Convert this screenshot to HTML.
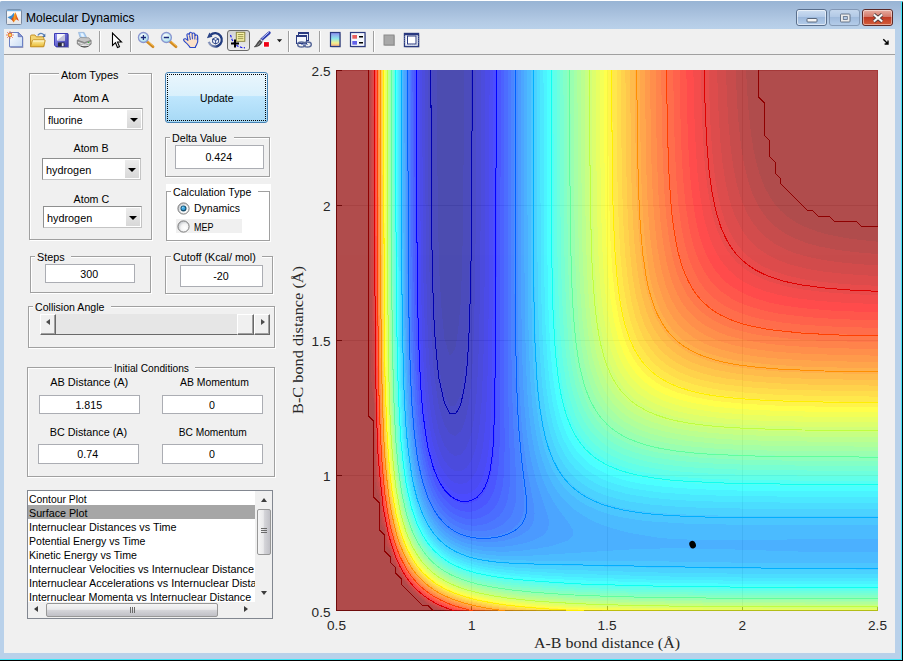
<!DOCTYPE html>
<html>
<head>
<meta charset="utf-8">
<title>Molecular Dynamics</title>
<style>
html,body{margin:0;padding:0;background:#fff;}
body{width:904px;height:664px;overflow:hidden;position:relative;font-family:"Liberation Sans",Arial,sans-serif;font-size:11px;color:#000;}
.abs{position:absolute;}
#win{position:absolute;left:0;top:1px;width:903px;height:660px;background:#b9d1ea;border-radius:2px 2px 0 0;overflow:hidden;}
#titlegrad{position:absolute;left:0;top:0;width:903px;height:28px;background:linear-gradient(#98b4d4 0%,#a3bcda 30%,#b4cbe5 75%,#b9d1ea 100%);}
#edgeR{position:absolute;left:901px;top:0;width:1px;height:660px;background:#3fe6f7;}
#edgeR2{position:absolute;left:902px;top:0;width:1px;height:660px;background:#000;}
#edgeB{position:absolute;left:0;top:658px;width:902px;height:1px;background:#3fe6f7;}
#edgeB2{position:absolute;left:0;top:659px;width:903px;height:1px;background:#000;}
#client{position:absolute;left:4px;top:28px;width:891px;height:624px;background:#f0f0f0;}
#title{position:absolute;left:26px;top:9px;font-size:12.05px;line-height:16px;color:#000;white-space:nowrap;}
#tbline{position:absolute;left:0;top:25px;width:891px;height:1px;background:#a0a0a0;}
.lbl{position:absolute;white-space:nowrap;line-height:13px;height:13px;font-size:11px;}
.ctr{text-align:center;}
.panel{position:absolute;border:1px solid #a0a0a0;box-shadow:1px 1px 0 #fff, inset 1px 1px 0 #fff;box-sizing:border-box;}
.ptitle{position:absolute;background:#f0f0f0;white-space:nowrap;line-height:13px;height:13px;font-size:11px;padding:0 2px;}
.edit{position:absolute;box-sizing:border-box;padding-right:1.5px;border:1px solid #abadb3;background:#fff;text-align:center;font-size:11px;white-space:nowrap;}
.popup{position:absolute;box-sizing:border-box;border:1px solid #8e8f8f;border-right-color:#c4c4c4;border-bottom-color:#c4c4c4;background:#fff;font-size:11px;white-space:nowrap;}
.popup>span{position:absolute;left:2.5px;top:4.5px;line-height:13px;}
.popup i{position:absolute;right:1px;top:1px;bottom:1px;width:14px;background:linear-gradient(#ececec,#d8d8d8);}
.popup i:after{content:"";position:absolute;left:3px;top:7.5px;border:4px solid transparent;border-top:4.500px solid #000;border-bottom:0;}
.sep{position:absolute;top:6px;width:1px;height:18px;background:#a0a0a0;box-shadow:1px 0 0 #fff;}
</style>
</head>
<body>
<div id="win">
 <div id="titlegrad"></div>
 <div id="edgeR"></div><div id="edgeR2"></div><div id="edgeB"></div><div id="edgeB2"></div>
 <svg class="abs" style="left:6px;top:8px" width="16" height="16" viewBox="0 0 16 16">
<defs><linearGradient id="gti" x1="0" y1="0" x2="0" y2="1"><stop offset="0" stop-color="#fff"/><stop offset="1" stop-color="#e4e4e6"/></linearGradient>
<linearGradient id="gml" x1="0" y1="0" x2="1" y2="0"><stop offset="0" stop-color="#c02010"/><stop offset=".45" stop-color="#f8a020"/><stop offset="1" stop-color="#c82818"/></linearGradient></defs>
<rect x=".5" y=".5" width="15" height="15" rx="1" fill="url(#gti)" stroke="#7a8aa0"/>
<path d="M1 1.500h14" stroke="#78b0e0" stroke-width="1.600"/>
<path d="M1.500 8.300l4-1.800 2.300-2.800 1 4.800-3.500 2.200z" fill="#3a8ad0"/>
<path d="M5.200 10.300l2.300-2.800 1.500-4.200c.8 0 1.400 2.300 2 4.200l1.800 4.300c-1.400-.8-2-1.800-2.800-1.200-1 .8-1.500 2.200-2.500 3-.6-1.600-1.300-2.400-2.300-3.300z" fill="url(#gml)"/>
</svg>

 <div id="title">Molecular Dynamics</div>
 <svg class="abs" style="left:790px;top:6px" width="110" height="22" viewBox="790 7 110 22">
<defs>
<linearGradient id="gc1" x1="0" y1="0" x2="0" y2="1"><stop offset="0" stop-color="#cfdff2"/><stop offset=".45" stop-color="#b4cbe8"/><stop offset=".5" stop-color="#9db9dc"/><stop offset="1" stop-color="#b5cdea"/></linearGradient>
<linearGradient id="gc2" x1="0" y1="0" x2="0" y2="1"><stop offset="0" stop-color="#e8b0a4"/><stop offset=".45" stop-color="#d4796a"/><stop offset=".5" stop-color="#c03a24"/><stop offset="1" stop-color="#d4603c"/></linearGradient>
</defs>
<rect x="796.500" y="9.500" width="30" height="16" rx="2.500" fill="url(#gc1)" stroke="#5a6f8c"/>
<rect x="797.500" y="10.500" width="28" height="14" rx="1.500" fill="none" stroke="#fff" stroke-opacity=".55"/>
<rect x="829.500" y="9.500" width="30" height="16" rx="2.500" fill="url(#gc1)" stroke="#7a8fac" opacity=".8"/>
<rect x="862.500" y="9.500" width="30" height="16" rx="2.500" fill="url(#gc2)" stroke="#5c2a28"/>
<rect x="863.500" y="10.500" width="28" height="14" rx="1.500" fill="none" stroke="#fff" stroke-opacity=".45"/>
<rect x="807" y="18.500" width="10" height="3.500" rx=".8" fill="#f4f4f4" stroke="#4a5a70" stroke-width=".9"/>
<rect x="840.500" y="14" width="9.500" height="8" rx=".8" fill="#eaeaea" stroke="#5a6a80" stroke-width=".9"/>
<rect x="843.300" y="16.600" width="4" height="2.800" fill="#b4cbe8" stroke="#5a6a80" stroke-width=".8"/>
<path d="M873.800 14.500l4.200 3.500 4.200-3.500M873.800 21.500l4.200-3.500 4.200 3.500" fill="none" stroke="#4a3a3a" stroke-width="3.600"/>
<path d="M873.800 14.500l4.200 3.500 4.200-3.500M873.800 21.500l4.200-3.500 4.200 3.500" fill="none" stroke="#f8f8f8" stroke-width="2.200"/>
</svg>

 <div id="client">
  <svg class="abs" style="left:0;top:0" width="891" height="26" viewBox="4 29 891 26">
<defs>
<linearGradient id="gpage" x1="0" y1="0" x2="1" y2="1"><stop offset="0" stop-color="#fff"/><stop offset="1" stop-color="#c8dcf4"/></linearGradient>
<linearGradient id="gfold" x1="0" y1="0" x2="0" y2="1"><stop offset="0" stop-color="#fff3b0"/><stop offset="1" stop-color="#e8b830"/></linearGradient>
<linearGradient id="gsave" x1="0" y1="0" x2="1" y2="1"><stop offset="0" stop-color="#9a9af8"/><stop offset="1" stop-color="#3636a4"/></linearGradient>
<linearGradient id="gcb" x1="0" y1="0" x2="0" y2="1"><stop offset="0" stop-color="#8c8cf0"/><stop offset="0.45" stop-color="#8fe8e8"/><stop offset="0.75" stop-color="#f4f08c"/><stop offset="1" stop-color="#f0a080"/></linearGradient>
<linearGradient id="gbtn" x1="0" y1="0" x2="0" y2="1"><stop offset="0" stop-color="#d4d4d4"/><stop offset="1" stop-color="#ececec"/></linearGradient>
<radialGradient id="glens" cx="0.4" cy="0.35" r="0.7"><stop offset="0" stop-color="#fff"/><stop offset="1" stop-color="#9fdcea"/></radialGradient>
<linearGradient id="grot" gradientUnits="userSpaceOnUse" x1="207" y1="44" x2="213" y2="40"><stop offset="0" stop-color="#b8c0d8"/><stop offset="1" stop-color="#223c80"/></linearGradient>
</defs>
<!-- new file -->
<g>
<path d="M10.300 33.300H19l4.300 4.200V48H10.300z" fill="#5a5a8a" opacity="0.55"/>
<path d="M9.500 32.500H18.200l4.300 4.200V46.800H9.500z" fill="url(#gpage)" stroke="#6a80c4" stroke-width="1"/>
<path d="M18.200 32.500V36.700h4.300z" fill="#8a9ad8" stroke="#5a6ab0" stroke-width="0.700"/>
<circle cx="10" cy="35" r="1.900" fill="#f4e060" stroke="#e8703c" stroke-width="1.100"/>
<path d="M10 31.200v1M10 37.800v1M6.200 35h1M12.800 35h1M7.300 32.300l.7.700M12 37l.7.700M7.300 37.700l.7-.7M12 33l.7-.7" stroke="#e8703c" stroke-width="1"/>
</g>
<!-- open folder -->
<g>
<path d="M30.500 46.500V36.300q0-1.300 1.300-1.300H35l1.300 1.800H42.500q1.300 0 1.300 1.300V46.500z" fill="#f4d470" stroke="#c4922a" stroke-width="1"/>
<path d="M30.500 46.800l1.700-6q.3-1 1.400-1H44.300q1.100 0 .8 1.100L43.600 46.800z" fill="url(#gfold)" stroke="#c4922a" stroke-width="1"/>
<path d="M33 41h11" stroke="#fff8d8" stroke-width="1" opacity=".9"/>
<path d="M37.800 35.300q3-3.800 6.200-.3" fill="none" stroke="#5a82b8" stroke-width="1.200"/>
<path d="M45.300 33.600v3.400h-3.200z" fill="#4a72a8"/>
</g>
<!-- save -->
<g>
<path d="M55.300 34.300h13.700v13.500H56.600L55.300 46.500z" fill="#3a3a80" opacity=".55"/>
<path d="M54.500 33.500h13.300v13H55.800L54.500 45.200z" fill="url(#gsave)" stroke="#3c3cb4" stroke-width="1"/>
<rect x="57" y="34" width="8" height="6.500" fill="#f6f6fc"/>
<path d="M57 40.500l8-6.500v6.500z" fill="#c4c4dc"/>
<rect x="58" y="42.500" width="6.500" height="4" fill="#282838"/>
<rect x="61.800" y="43.200" width="1.800" height="3" fill="#e8e8f0"/>
</g>
<!-- print -->
<g>
<path d="M78.500 32.400h5.600l2.600 5.200h-6.600z" fill="#a8d0f8" stroke="#88a8d0" stroke-width=".6"/>
<path d="M80.300 33.200h2.600l1.800 3.600h-3z" fill="#e8f4ff"/>
<path d="M77.400 40.200l3.100-2.700 8.400 .3 2.100 2.700-6.500 2.200z" fill="#c4c4c4" stroke="#8c8c8c" stroke-width=".7"/>
<path d="M77.300 40.300v3.700l3.400 2.200q3.800 1.600 7.600 0l2.800-2v-3.700l-6.600 2.200z" fill="#a4a4a4" stroke="#787878" stroke-width=".8"/>
<path d="M78 42.300l6.500 2.300 6-2" fill="none" stroke="#ececec" stroke-width=".9"/>
<path d="M80.500 44.600q4 1.400 8.300-.2v1q-4.300 1.700-8.300 .2z" fill="#f4f4f4"/>
<path d="M81 46.300q3.800 1.200 7.300 0" fill="none" stroke="#505050" stroke-width="1.200"/>
<rect x="87.900" y="41.800" width="1.400" height="1.100" fill="#38b838"/>
</g>
<path d="M99.500 31v21" stroke="#a0a0a0"/><path d="M100.500 31v21" stroke="#fff"/>
<!-- pointer -->
<path d="M112.500 33v12.500l3-2.800 2 4.800 2-.9-2-4.600h4z" fill="#fff" stroke="#000" stroke-width="1.100" stroke-linejoin="miter"/>
<path d="M130.500 31v21" stroke="#a0a0a0"/><path d="M131.500 31v21" stroke="#fff"/>
<!-- zoom in -->
<g>
<path d="M147 41.500l6 5.200" stroke="#d08820" stroke-width="2.800" stroke-linecap="round"/>
<path d="M147.500 41l5.800 5" stroke="#f4b848" stroke-width="1" stroke-linecap="round"/>
<circle cx="143.400" cy="37.500" r="5" fill="url(#glens)" stroke="#8a96d0" stroke-width="1.300"/>
<path d="M140.800 37.500h5.200M143.400 34.900v5.200" stroke="#1a2a7a" stroke-width="1.300"/>
</g>
<!-- zoom out -->
<g>
<path d="M170 41.500l6 5.200" stroke="#d08820" stroke-width="2.800" stroke-linecap="round"/>
<path d="M170.500 41l5.800 5" stroke="#f4b848" stroke-width="1" stroke-linecap="round"/>
<circle cx="166.400" cy="37.500" r="5" fill="url(#glens)" stroke="#8a96d0" stroke-width="1.300"/>
<path d="M163.800 37.500h5.200" stroke="#1a2a7a" stroke-width="1.300"/>
</g>
<!-- pan hand -->
<g transform="translate(192 0) scale(1.13 1) translate(-191.700 0)">
<path d="M190 47.600c-.3-1.500-1.500-2.800-4.500-5.800-1.200-1.200-1.600-2-1-2.700.8-.9 2-.3 3.600 1.400l-.9-5.300c-.2-1.500 1.600-2 2-.5l.3-1.400c.3-1.300 2.200-1.200 2.300.1l.2.300c.4-1.200 2.200-1 2.300.3l.2 1.500c.6-1 2.200-.7 2.200.7l.1 2.400c.3 2.800 .3 4.500-1.200 6.500-.8 1.100-.9 1.700-1 2.500z" fill="#fbe1c8" stroke="#2848c8" stroke-width="1" stroke-linejoin="round"/>
<path d="M189.500 35.500l.8 4.300M191.800 34l.3 5.300M194.300 34.300l-.1 5.200M196.600 36.600l-.3 3.400" stroke="#2848c8" stroke-width=".9" fill="none"/>
</g>
<!-- rotate 3d -->
<g>
<path d="M210.400 35.100A6.700 6.700 0 1 1 208.700 41.800" fill="none" stroke="url(#grot)" stroke-width="2.300"/>
<path d="M206.900 38.200l2.500-5.600 3 4.200z" fill="#2a4486"/>
<path d="M212.600 39l3-1.500 3 1.500v3.400l-3 1.600-3-1.600z" fill="#e8eefa" stroke="#223c80" stroke-width=".9"/>
<path d="M212.600 39l3 1.400 3-1.400M215.600 40.400v3.600" fill="none" stroke="#223c80" stroke-width=".9"/>
</g>
<!-- data cursor (pressed) -->
<g>
<rect x="227.500" y="30.500" width="22" height="20" rx="2.500" fill="url(#gbtn)" stroke="#6a6a6a"/>
<path d="M230.500 35l1.500 4.500 2 3.500 3.500 3 4 1.500 3.500.3" fill="none" stroke="#1818e8" stroke-width="1.200" stroke-dasharray="2.500 1.500"/>
<rect x="236.300" y="32.300" width="8.500" height="9" fill="#f8f4a8" stroke="#8a8440" stroke-width="1"/>
<path d="M237.800 34.600h5.600M237.800 36.700h5.600M237.800 38.700h5.600" stroke="#908840" stroke-width=".9"/>
<path d="M235 39.500v8M231 43.500h8" stroke="#000" stroke-width="2"/>
</g>
<!-- brush -->
<g>
<path d="M269.200 32.800l-7.400 6.600" stroke="#2c3cb0" stroke-width="3" stroke-linecap="round"/>
<path d="M268.600 32.600l-6.600 5.900" stroke="#c4ccf8" stroke-width="1" stroke-linecap="round"/>
<path d="M261 38.800l2.200 2.200-1.400 1.400-2.200-2.200z" fill="#dcdcec" stroke="#707080" stroke-width=".5"/>
<path d="M259.800 40l2.200 2.200c-1.300 2.800-4 4.700-7.800 4.700 2.200-1.400 3-4.800 5.600-6.900z" fill="#4c4c4c" stroke="#262626" stroke-width=".5"/>
<path d="M257.200 45.400q2-1.300 3.200-3.600" stroke="#a8a8a8" stroke-width=".8" fill="none"/>
<rect x="263.300" y="41.400" width="6.300" height="6" fill="#fff"/>
<rect x="264" y="42.100" width="4.900" height="4.600" fill="#f00014"/>
</g>
<path d="M276.900 39.200h5.200l-2.600 3z" fill="#1a1a1a"/>
<path d="M288.500 31v21" stroke="#a0a0a0"/><path d="M289.500 31v21" stroke="#fff"/>
<!-- link -->
<g>
<rect x="298.500" y="32.500" width="10" height="8" fill="#e8eef8" stroke="#2a3a80" stroke-width="1"/>
<path d="M298 33h11" stroke="#2a3a80" stroke-width="1.800"/>
<rect x="296.500" y="35.500" width="10" height="8" fill="#f4f7fc" stroke="#2a3a80" stroke-width="1"/>
<path d="M296 36h11" stroke="#2a3a80" stroke-width="1.800"/>
<ellipse cx="301.500" cy="44.500" rx="3.800" ry="2.500" fill="none" stroke="#5a6a9a" stroke-width="1.500"/>
<ellipse cx="307.500" cy="44.500" rx="3.800" ry="2.500" fill="none" stroke="#5a6a9a" stroke-width="1.500"/>
<path d="M301 44.500h7" stroke="#8a9ac8" stroke-width="1.200"/>
</g>
<path d="M319.500 31v21" stroke="#a0a0a0"/><path d="M320.500 31v21" stroke="#fff"/>
<!-- colorbar -->
<rect x="331.500" y="33.500" width="9.500" height="14" fill="#808080" opacity=".4"/>
<rect x="330.500" y="32.500" width="9.500" height="14" fill="url(#gcb)" stroke="#2a3a80" stroke-width="1.200"/>
<!-- legend -->
<g>
<rect x="351.500" y="33.500" width="14.500" height="14" fill="#808080" opacity=".4"/>
<rect x="350.500" y="32.500" width="14.500" height="14" fill="#f4f7fc" stroke="#2a3a80" stroke-width="1.200"/>
<rect x="352.300" y="35" width="4.700" height="3.700" fill="#e86060"/>
<rect x="352.300" y="41" width="4.700" height="3.700" fill="#6060e8"/>
<path d="M359 36.800h4M359 42.800h4" stroke="#000" stroke-width="1.500"/>
</g>
<path d="M373.500 31v21" stroke="#a0a0a0"/><path d="M374.500 31v21" stroke="#fff"/>
<!-- hide plot tools -->
<rect x="384.500" y="35.500" width="10.500" height="10.500" fill="#9a9a9a" opacity=".6"/>
<rect x="384" y="35" width="10" height="10" fill="#a8a8a8" stroke="#8a8a8a" stroke-width="1"/>
<!-- show plot tools -->
<g>
<rect x="405.500" y="34.500" width="14" height="13" fill="#808080" opacity=".4"/>
<rect x="404.500" y="33.500" width="14" height="13" fill="#fff" stroke="#2a3a80" stroke-width="1.400"/>
<path d="M404.500 34.200h14" stroke="#2a3a80" stroke-width="2"/>
<path d="M405.500 36v8M417.500 36v8M406 45.200h12" stroke="#c8d4e8" stroke-width="1.600" stroke-dasharray="1 1"/>
<rect x="407.500" y="36" width="8.500" height="8" fill="#fff" stroke="#2a3a80" stroke-width="1"/>
</g>
<!-- dock arrow -->
<path d="M883.300 39.300l4.200 4.200M888 40.600v3.400h-3.400" fill="none" stroke="#000" stroke-width="1.400"/>
</svg>

  <div id="tbline"></div>
  <div class="panel" style="left:25px;top:44px;width:123px;height:167px;"></div>
<div class="ptitle" style="left:55px;top:40px;width:64.5px;background:#f0f0f0;"><span style="display:inline-block;transform:scaleX(0.993);transform-origin:left 50%;">Atom Types</span></div>
<div class="lbl ctr" style="left:27px;top:63px;width:120px;">Atom A</div>
<div class="popup" style="left:40px;top:79px;width:99px;height:22px;"><span><span style="display:inline-block;transform:scaleX(0.956);transform-origin:left 50%;">fluorine</span></span><i></i></div>
<div class="lbl ctr" style="left:27px;top:113px;width:120px;"><span style="display:inline-block;transform:scaleX(0.970);transform-origin:center 50%;">Atom B</span></div>
<div class="popup" style="left:38px;top:129px;width:99px;height:22px;"><span><span style="display:inline-block;transform:scaleX(0.985);transform-origin:left 50%;">hydrogen</span></span><i></i></div>
<div class="lbl ctr" style="left:27px;top:164px;width:120px;"><span style="display:inline-block;transform:scaleX(0.970);transform-origin:center 50%;">Atom C</span></div>
<div class="popup" style="left:39px;top:177px;width:99px;height:22px;"><span><span style="display:inline-block;transform:scaleX(0.985);transform-origin:left 50%;">hydrogen</span></span><i></i></div>
<div class="abs" style="left:161px;top:43px;width:103px;height:51px;box-sizing:border-box;border:1px solid #4682b4;border-radius:3px;background:linear-gradient(#eaf6fd 0%,#d9f0fc 47%,#bee6fd 48%,#a7d9f5 100%);"><div class="abs" style="left:1px;top:1px;right:1px;bottom:1px;border:1px dotted #000;"></div><div class="lbl ctr" style="left:0;top:19px;width:101px;"><span style="display:inline-block;transform:scaleX(0.939);transform-origin:center 50%;">Update</span></div></div>
<div class="panel" style="left:161px;top:108px;width:105px;height:40px;"></div>
<div class="ptitle" style="left:166px;top:103px;width:59.6px;background:#f0f0f0;"><span style="display:inline-block;transform:scaleX(0.974);transform-origin:left 50%;">Delta Value</span></div>
<div class="edit" style="left:171px;top:116px;width:89px;height:24px;line-height:22px;overflow:hidden;"><span style="display:inline-block;transform:scaleX(0.970);transform-origin:center 50%;">0.424</span></div>
<div class="abs" style="left:162px;top:155px;width:105px;height:57px;background:#fff;"></div>
<div class="panel" style="left:162px;top:162px;width:104px;height:50px;"></div>
<div class="ptitle" style="left:167px;top:157px;width:83.3px;background:#fff;"><span style="display:inline-block;transform:scaleX(0.965);transform-origin:left 50%;">Calculation Type</span></div>
<svg class="abs" style="left:172.5px;top:173.3px" width="13" height="13" viewBox="0 0 13 13"><defs><radialGradient id="rg1" cx="0.62" cy="0.62" r="0.62"><stop offset="0" stop-color="#fff"/><stop offset="0.55" stop-color="#f4f4f4"/><stop offset="1" stop-color="#c4c8cc"/></radialGradient></defs><circle cx="6.5" cy="6.5" r="5.6" fill="url(#rg1)" stroke="#6e6e6e" stroke-width="0.9"/><circle cx="6.5" cy="6.5" r="3" fill="#17506e"/><circle cx="6.3" cy="6.2" r="1.9" fill="#3aa6e2"/><circle cx="5.8" cy="5.6" r=".8" fill="#9ad8f4"/></svg>
<div class="lbl" style="left:190px;top:173.4px;"><span style="display:inline-block;transform:scaleX(0.955);transform-origin:left 50%;">Dynamics</span></div>
<div class="abs" style="left:172px;top:190.4px;width:66px;height:13.5px;background:#f0f0f0;"></div>
<svg class="abs" style="left:172.5px;top:191.4px" width="13" height="13" viewBox="0 0 13 13"><defs><radialGradient id="rg0" cx="0.62" cy="0.62" r="0.62"><stop offset="0" stop-color="#fff"/><stop offset="0.55" stop-color="#f4f4f4"/><stop offset="1" stop-color="#c4c8cc"/></radialGradient></defs><circle cx="6.5" cy="6.5" r="5.6" fill="url(#rg0)" stroke="#6e6e6e" stroke-width="0.9"/></svg>
<div class="lbl" style="left:190px;top:191.5px;"><span style="display:inline-block;transform:scaleX(0.818);transform-origin:left 50%;">MEP</span></div>
<div class="panel" style="left:26px;top:227px;width:121px;height:37px;"></div>
<div class="ptitle" style="left:30.5px;top:222px;width:32.6px;background:#f0f0f0;"><span style="display:inline-block;transform:scaleX(0.981);transform-origin:left 50%;">Steps</span></div>
<div class="edit" style="left:41px;top:235px;width:90px;height:19px;line-height:18.6px;overflow:hidden;"><span style="display:inline-block;transform:scaleX(0.970);transform-origin:center 50%;">300</span></div>
<div class="panel" style="left:161px;top:227px;width:108px;height:38px;"></div>
<div class="ptitle" style="left:166.5px;top:222px;width:87.8px;background:#f0f0f0;"><span style="display:inline-block;transform:scaleX(0.977);transform-origin:left 50%;">Cutoff (Kcal/ mol)</span></div>
<div class="edit" style="left:176px;top:236px;width:83px;height:22px;line-height:20px;overflow:hidden;"><span style="display:inline-block;transform:scaleX(0.970);transform-origin:center 50%;">-20</span></div>
<div class="panel" style="left:24px;top:277px;width:246.5px;height:42px;"></div>
<div class="ptitle" style="left:28.7px;top:272px;width:74.4px;background:#f0f0f0;"><span style="display:inline-block;transform:scaleX(0.962);transform-origin:left 50%;">Collision Angle</span></div>
<div class="abs" style="left:36px;top:285px;width:230px;height:21px;background:#e6e6e6;box-shadow:inset 0 -1px 0 #696969;"></div>
<div class="abs" style="left:36px;top:285px;width:16px;height:21px;box-sizing:border-box;background:#f0f0f0;border:1px solid;border-color:#fff #696969 #696969 #fff;box-shadow:inset -1px -1px 0 #a0a0a0;"><div class="abs" style="left:5px;top:4px;border:3.5px solid transparent;border-right:4px solid #4d4d4d;border-left:0;"></div></div>
<div class="abs" style="left:250px;top:285px;width:16px;height:21px;box-sizing:border-box;background:#f0f0f0;border:1px solid;border-color:#fff #696969 #696969 #fff;box-shadow:inset -1px -1px 0 #a0a0a0;"><div class="abs" style="left:6px;top:4px;border:3.5px solid transparent;border-left:4px solid #4d4d4d;border-right:0;"></div></div>
<div class="abs" style="left:233px;top:285px;width:17px;height:21px;box-sizing:border-box;background:#f0f0f0;border:1px solid;border-color:#fff #696969 #696969 #fff;box-shadow:inset -1px -1px 0 #a0a0a0;"></div>
<div class="panel" style="left:23px;top:338px;width:248px;height:109.5px;"></div>
<div class="ptitle" style="left:107.5px;top:333px;width:79px;background:#f0f0f0;"><span style="display:inline-block;transform:scaleX(0.929);transform-origin:left 50%;">Initial Conditions</span></div>
<div class="lbl ctr" style="left:25.5px;top:346.5px;width:120px;"><span style="display:inline-block;transform:scaleX(0.996);transform-origin:center 50%;">AB Distance (A)</span></div>
<div class="lbl ctr" style="left:150.5px;top:346.5px;width:120px;"><span style="display:inline-block;transform:scaleX(0.947);transform-origin:center 50%;">AB Momentum</span></div>
<div class="edit" style="left:35px;top:366px;width:101px;height:19px;line-height:19px;overflow:hidden;"><span style="display:inline-block;transform:scaleX(0.970);transform-origin:center 50%;">1.815</span></div>
<div class="edit" style="left:158px;top:366px;width:101px;height:19px;line-height:19px;overflow:hidden;"><span style="display:inline-block;transform:scaleX(0.970);transform-origin:center 50%;">0</span></div>
<div class="lbl ctr" style="left:24px;top:396.5px;width:120px;"><span style="display:inline-block;transform:scaleX(0.980);transform-origin:center 50%;">BC Distance (A)</span></div>
<div class="lbl ctr" style="left:148.5px;top:396.5px;width:120px;"><span style="display:inline-block;transform:scaleX(0.926);transform-origin:center 50%;">BC Momentum</span></div>
<div class="edit" style="left:34px;top:415px;width:101px;height:20px;line-height:19px;overflow:hidden;"><span style="display:inline-block;transform:scaleX(0.970);transform-origin:center 50%;">0.74</span></div>
<div class="edit" style="left:158px;top:415px;width:101px;height:20px;line-height:19px;overflow:hidden;"><span style="display:inline-block;transform:scaleX(0.970);transform-origin:center 50%;">0</span></div>
<div class="abs" style="left:23px;top:461px;width:246px;height:129px;box-sizing:border-box;border:1px solid #828790;background:#fff;overflow:hidden;"><div class="abs" style="left:0;top:0;width:227px;height:112px;overflow:hidden;"><div style="position:absolute;left:0;top:1px;width:260px;height:14px;line-height:14px;white-space:nowrap;font-size:11px;padding-left:1px;"><span style="display:inline-block;transform:scaleX(0.942);transform-origin:left 50%;">Contour Plot</span></div><div class="abs" style="left:0;top:14px;width:227px;height:14px;background:#a6a6a6;"></div><div style="position:absolute;left:0;top:15px;width:260px;height:14px;line-height:14px;white-space:nowrap;font-size:11px;padding-left:1px;"><span style="display:inline-block;transform:scaleX(0.975);transform-origin:left 50%;">Surface Plot</span></div><div style="position:absolute;left:0;top:29px;width:260px;height:14px;line-height:14px;white-space:nowrap;font-size:11px;padding-left:1px;"><span style="display:inline-block;transform:scaleX(0.981);transform-origin:left 50%;">Internuclear Distances vs Time</span></div><div style="position:absolute;left:0;top:43px;width:260px;height:14px;line-height:14px;white-space:nowrap;font-size:11px;padding-left:1px;"><span style="display:inline-block;transform:scaleX(0.957);transform-origin:left 50%;">Potential Energy vs Time</span></div><div style="position:absolute;left:0;top:57px;width:260px;height:14px;line-height:14px;white-space:nowrap;font-size:11px;padding-left:1px;"><span style="display:inline-block;transform:scaleX(0.965);transform-origin:left 50%;">Kinetic Energy vs Time</span></div><div style="position:absolute;left:0;top:71px;width:260px;height:14px;line-height:14px;white-space:nowrap;font-size:11px;padding-left:1px;"><span style="display:inline-block;transform:scaleX(0.984);transform-origin:left 50%;">Internuclear Velocities vs Internuclear Distance</span></div><div style="position:absolute;left:0;top:85px;width:260px;height:14px;line-height:14px;white-space:nowrap;font-size:11px;padding-left:1px;"><span style="display:inline-block;transform:scaleX(0.990);transform-origin:left 50%;">Internuclear Accelerations vs Internuclear Distance</span></div><div style="position:absolute;left:0;top:99px;width:260px;height:14px;line-height:14px;white-space:nowrap;font-size:11px;padding-left:1px;"><span style="display:inline-block;transform:scaleX(0.974);transform-origin:left 50%;">Internuclear Momenta vs Internuclear Distance</span></div></div><div class="abs" style="left:227px;top:0;width:17px;height:110px;background:#f0f0f0;"><div class="abs" style="left:5.5px;top:7px;border:3.5px solid transparent;border-bottom:4px solid #3c3c3c;border-top:0;"></div><div class="abs" style="left:5.5px;top:100px;border:3.5px solid transparent;border-top:4px solid #3c3c3c;border-bottom:0;"></div><div class="abs" style="left:2px;top:18px;width:14px;height:46px;box-sizing:border-box;border:1px solid #979797;border-radius:2px;background:linear-gradient(90deg,#f5f5f5 0%,#e9e9eb 45%,#d6d6da 50%,#c0c0c6 100%);"><div class="abs" style="left:3px;top:18px;width:6px;height:1px;background:#6a6a6a;box-shadow:0 2px 0 #6a6a6a,0 4px 0 #6a6a6a;"></div></div></div><div class="abs" style="left:0;top:111px;width:227px;height:16px;background:#f0f0f0;"><div class="abs" style="left:6px;top:4px;border:3.5px solid transparent;border-right:4px solid #3c3c3c;border-left:0;"></div><div class="abs" style="left:216px;top:4px;border:3.5px solid transparent;border-left:4px solid #3c3c3c;border-right:0;"></div><div class="abs" style="left:18px;top:1px;width:172px;height:14px;box-sizing:border-box;border:1px solid #979797;border-radius:2px;background:linear-gradient(#f5f5f5 0%,#e9e9eb 45%,#d6d6da 50%,#c0c0c6 100%);"><div class="abs" style="left:83px;top:3px;width:1px;height:6px;background:#6a6a6a;box-shadow:2px 0 0 #6a6a6a,4px 0 0 #6a6a6a;"></div></div></div><div class="abs" style="left:227px;top:110px;width:17px;height:17px;background:#f0f0f0;"></div></div>
  <svg class="abs" style="left:0;top:0" width="891" height="624" viewBox="4 29 891 624"><defs><clipPath id="pc"><rect x="0" y="0" width="542" height="541"/></clipPath></defs><g transform="translate(336,70)"><rect x="0" y="0" width="542" height="541" fill="#fff"/><g stroke="#262626" stroke-opacity="0.15" stroke-width="1" shape-rendering="crispEdges"><path d="M135.5 0V541"/><path d="M0 405.5H542"/><path d="M271.5 0V541"/><path d="M0 270.5H542"/><path d="M406.5 0V541"/><path d="M0 135.5H542"/></g><g stroke="#262626" stroke-width="1" fill="none" shape-rendering="crispEdges"><path d="M0.5 0V541"/><path d="M0 540.5H542"/><path d="M135.5 541v-5.5"/><path d="M0 405.5h5.5"/><path d="M271.5 541v-5.5"/><path d="M0 270.5h5.5"/><path d="M406.5 541v-5.5"/><path d="M0 135.5h5.5"/><path d="M541.5 541v-5.5"/><path d="M0 0.5h5.5"/></g><g clip-path="url(#pc)"><g transform="scale(1.00185,1)" opacity="0.7"><g shape-rendering="crispEdges"><rect x="0" y="0" width="541" height="541" fill="#00008f"/><path fill="#00009f" d="M5.4 541l535.6 0l0 -541l-413 0l-1.1 146.1l-1 48.7l-1.5 38.7l-2.5 26.2l-2.9 19.6l-5.4 6.6l-5.4 -17.2l-2.9 -30.7l-2.5 -40.2l-1.4 -78.8l-0.7 -119l-100.7 0l0 541l5.4 0z"/><path fill="#0000af" d="M5.4 541l535.6 0l0 -541l-406.2 0l-1 167.7l-1.1 54.1l-1.3 37.9l-1.6 27.4l-3.4 26.7l-2 10.6l-5.4 11.6l-5.4 -0.3l-5.4 -10.7l-5.4 -27.2l-2.8 -32.7l-2.3 -43.3l-0.9 -37.9l-0.8 -75.7l-0.4 -108.2l-95.6 0l0 541l5.4 0z"/><path fill="#0000bf" d="M5.4 541l535.6 0l0 -541l-400.8 0l-0.4 119l-0.8 81.2l-1.1 54.1l-1.8 43.3l-0.9 12.3l-1.5 14.7l-1.5 10.8l-2.4 12.4l-3.3 9.3l-2.1 4.5l-5.4 4.3l-5.4 -2.2l-5.4 -8.7l-1.1 -3.4l-4.3 -14.6l-2.8 -17.8l-2.7 -21.6l-2.7 -48.7l-1.6 -59.6l-1 -81.1l-0.3 -108.2l-91.7 0l0 541l5.4 0z"/><path fill="#0000cf" d="M5.4 541l535.6 0l0 -541l-396.1 0l-0.4 129.8l-0.7 86.6l-1.2 59.5l-1.9 44l-2.7 26.3l-2.7 16.3l-1.5 5.4l-4.2 10.8l-5.2 6.1l-5.4 1.2l-5.4 -3l-5.4 -7.6l-5.4 -13.9l-5.4 -25.8l-3.9 -38.1l-1.9 -32.5l-1.6 -64.9l-0.8 -81.2l-0.4 -119l-88.8 0l0 541l5.4 0z"/><path fill="#0000df" d="M5.4 541l535.6 0l0 -541l-391.8 0l-1 227.2l-1 59.5l-1.7 43.3l-2.4 27.1l-2.4 15.9l-1.4 5.7l-3.7 10.8l-3.2 5.4l-2.6 3.3l-5.4 3.1l-5.4 -0.3l-5.4 -3.4l-5.4 -6.8l-5.4 -11.7l-5.4 -19.8l-3 -18.5l-2.4 -19.8l-1.7 -23.4l-1.3 -27.1l-1.7 -59.5l-0.8 -70.3l-0.4 -140.7l-86.1 0l0 541l5.4 0z"/><path fill="#0000ef" d="M5.4 541l535.6 0l0 -541l-387.7 0l-0.4 156.9l-0.7 97.4l-1.1 59.5l-1.8 37.8l-1.5 16.3l-1.7 12.6l-2 9l-3.4 10.5l-3.3 5.8l-2.2 2.9l-5.4 4.2l-5.4 1.2l-5.4 -1.1l-5.4 -3.6l-5.4 -6.4l-5.4 -10.2l-5.4 -16.3l-1.9 -8.6l-3.5 -19.8l-2 -18.1l-1.7 -21.6l-1.6 -27.1l-1.4 -48.7l-1 -86.5l-0.4 -146.1l-83.9 0l0 541l5.4 0z"/><path fill="#0000ff" d="M5.4 541l535.6 0l0 -541l-383.9 -0l-0.3 162.3l-0.7 108.2l-0.9 59.5l-1.8 37.9l-1.6 16.2l-1.9 10.8l-3 10.9l-2.3 5.4l-3.9 6.3l-5.5 4.8l-5.4 2.1l-5.4 0.1l-5.4 -1.7l-5.4 -3.6l-5.4 -6l-5.4 -9.2l-5.4 -13.9l-4.1 -16.8l-2.8 -16.2l-2.6 -21.7l-1.3 -13.6l-1.7 -29.7l-1.9 -64.9l-0.9 -86.5l-0.4 -140.7l-81.7 0l0 541l5.4 0z"/><path fill="#0010ff" d="M5.4 541l535.6 0l0 -541l-380.2 0l-0.8 292.1l-0.7 54.1l-1.3 32.5l-0.9 10.8l-1.6 10.8l-2.5 10.9l-2 5.4l-2.8 5.4l-2.1 3.2l-5.4 5.1l-5.5 2.7l-5.4 0.8l-5.4 -0.5l-1.2 -0.5l-4.2 -1.6l-5.4 -3.6l-5.4 -5.7l-5.4 -8.4l-5.4 -12.3l-5.4 -19.3l-2.5 -14l-2.9 -20.4l-3.3 -44.5l-2.2 -59.8l-0.9 -91.7l-0.4 -151.5l-79.8 0l0 541l5.4 0z"/><path fill="#0020ff" d="M5.4 541l535.6 0l0 -541l-376.6 0l-0.6 340.8l-0.4 32.5l-1.1 21.6l-1.2 10.9l-2.1 10.8l-2.1 6.3l-2.1 4.5l-3.3 5l-5.4 5.1l-5.4 2.8l-5.5 1.4l-5.4 0.1l-5.4 -1.1l-5.4 -2.2l-5.4 -3.7l-5.4 -5.4l-5.4 -7.7l-5.4 -11.1l-5.4 -16.7l-3.2 -15.2l-2.7 -16.2l-2.7 -27.1l-1.9 -27l-1.9 -54.1l-1.1 -92l-0.4 -162.3l-78.1 0l0 541l5.4 0z"/><path fill="#0030ff" d="M5.4 541l535.6 0l0 -541l-373.1 0l-0.2 259.7l0.6 119l-0.8 27.1l-1.3 10.8l-2.6 10.8l-2.2 5.4l-3.4 5.4l-5.6 5.4l-6.3 3.4l-5.4 1.6l-5.5 0.5l-5.4 -0.4l-5.4 -1.5l-5.4 -2.4l-5.4 -3.6l-5.4 -5.2l-5.4 -7.2l-5.4 -10.1l-5.4 -14.9l-5.4 -23.5l-1.8 -12.4l-2.5 -21.7l-1.4 -16.2l-1.7 -32.4l-1.2 -37.9l-1.2 -92l-0.5 -167.7l-76.3 0l0 541l5.4 0z"/><path fill="#0040ff" d="M5.4 541l535.6 0l0 -541l-369.7 0l0 265.1l0.6 59.5l1.7 70.3l-0.4 21.7l-1.4 10.8l-1.4 5.4l-2.1 5.4l-3.3 5.4l-2.7 3l-5.4 4.1l-5.4 2.6l-3.8 1.1l-7 1.1l-5.5 0l-5.4 -0.8l-5.4 -1.6l-5.4 -2.5l-5.4 -3.6l-5.4 -5l-5.4 -6.8l-5.4 -9.4l-5.4 -13.3l-5.4 -20.6l-3.1 -18.6l-2.4 -18.2l-1.9 -25.1l-1.7 -32.4l-1.2 -37.9l-1.1 -86.6l-0.4 -173.1l-74.8 0l0 541l5.4 0z"/><path fill="#0050ff" d="M5.4 541l535.6 0l0 -541l-366.3 0l-0.1 200.2l0.5 86.5l1.4 59.5l3.4 65l-0.1 16.2l-0.6 5.4l-1.2 5.4l-2 5.4l-3.3 5.4l-5 4.8l-5.4 3.2l-7.3 2.8l-8.9 1.6l-5.4 0.1l-5.5 -0.4l-5.4 -1l-5.4 -1.8l-5.4 -2.6l-5.4 -3.5l-5.4 -4.8l-5.4 -6.4l-5.4 -8.7l-4.6 -10.3l-1.9 -5.4l-4.7 -16.3l-4.7 -27l-2.3 -21.7l-2 -27l-1.5 -29.2l-0.8 -30.3l-1.1 -97.4l-0.4 -167.7l-73.4 0l0 541l5.4 0z"/><path fill="#0060ff" d="M5.4 541l535.6 0l0 -541l-363 0l0 205.6l0.9 92l0.9 32.4l1.4 27.1l2.2 27l4 37.9l0.6 10.8l-0.3 5.4l-0.8 5.4l-1.9 5.4l-3.5 5.4l-6.5 5.4l-7.3 3.5l-5.4 1.8l-5.4 1.1l-10.8 0.8l-10.9 -0.9l-5.4 -1.2l-5.4 -1.9l-5.4 -2.6l-5.4 -3.5l-5.4 -4.6l-5.4 -6.1l-5.4 -8.2l-5.1 -10.6l-2 -5.4l-3.7 -11.7l-5.5 -26.4l-3.1 -26.8l-2.2 -27.1l-2.1 -59.5l-1.3 -97.4l-0.4 -173.1l-72 0l0 541l5.4 0z"/><path fill="#0070ff" d="M5.4 541l535.6 0l0 -541l-359.7 0l0.1 221.8l0.6 54.1l1 37.9l1.7 32.4l2.4 27.1l3.8 27l6.2 32.5l1.1 10.8l-0.4 5.4l-1.7 5.4l-3.8 5.4l-7.7 5.5l-6.1 2.4l-10.6 3l-5.6 0.8l-10.8 0.7l-10.8 -0.7l-5.5 -0.8l-10.8 -3.4l-5.4 -2.6l-5.4 -3.4l-5.4 -4.5l-5.4 -5.8l-5.4 -7.7l-5.4 -10.5l-5.4 -15l-5.5 -23.3l-3 -21.2l-2.4 -23l-1.8 -31.1l-1.4 -37.9l-1.4 -97.4l-0.5 -183.9l-70.6 0l0 541l5.4 0z"/><path fill="#0080ff" d="M5.4 541l535.6 0l0 -541l-356.4 0l0.3 232.6l0.9 54.1l1.8 43.3l2.8 32.5l2.3 16.2l2.1 11.9l5.4 22.1l10.5 30.9l1.4 5.4l0.5 5.4l-1.3 5.4l-4.4 5.5l-10.1 5.4l-7.4 2.2l-10.9 2.4l-10.8 1.3l-10.8 0.4l-10.8 -0.5l-5.4 -0.7l-10.9 -2.6l-5.4 -1.9l-5.4 -2.6l-5.4 -3.3l-6.6 -5.6l-4.2 -4.4l-4.8 -6.4l-6 -10.7l-5.4 -13.9l-3.7 -13.2l-2.4 -10.9l-3.3 -21.6l-2.3 -21.6l-2.1 -32.5l-1.6 -43.3l-0.9 -38.9l-0.5 -53.1l-0.4 -189.3l-69.4 0l0 541l5.4 0z"/><path fill="#008fff" d="M5.4 541l535.6 0l0 -541l-353.2 0l0.1 167.7l0.6 81.2l1.5 54.1l1.1 21.6l1.8 21.6l2 16.3l2.8 16.2l3.8 16.2l4.1 12.8l5.4 12.8l5.4 10l5.4 8.3l11.5 15.6l3 5.4l0.3 5.5l-5.5 5.4l-16.1 5.4l-14.8 2.6l-16.3 2.1l-10.8 0.7l-10.8 0.2l-16.2 -1.1l-10.9 -2.1l-5.4 -1.5l-5.4 -2l-5.4 -2.6l-5.4 -3.3l-5.4 -4.2l-5.4 -5.4l-4 -5.1l-6.8 -11.1l-4.5 -10.5l-1.9 -5.4l-4.5 -15.8l-1.1 -5.8l-4.3 -26l-1.7 -17.3l-2.3 -32.5l-1.4 -32.4l-1 -43.3l-0.6 -59.5l-0.5 -194.8l-68.2 0l0 541l5.4 0z"/><path fill="#009fff" d="M5.4 541l535.6 0l0 -58.8l-80.2 -0.7l-87.5 -2.8l-43.3 -0.4l-37.9 1.2l-97.3 6.1l-16.3 0.5l-16.2 -0.3l-16.2 -1.6l-10.9 -2.2l-5.4 -1.6l-10.3 -4.3l-5.9 -3.5l-5.4 -4.1l-5.4 -5.2l-5.4 -6.7l-5.4 -8.8l-5.4 -11.9l-5.5 -17.3l-2.7 -12.8l-2.7 -15.2l-2 -17.3l-1.9 -21.7l-1.5 -22l-0.8 -21.2l-1.5 -65l-0.7 -91.9l-0.2 -151.5l-67.1 0l0 541l5.4 0zM308.4 465.5l10.8 1.9l10.8 1.1l16.2 0.9l16.3 0.4l43.3 0.1l135.2 -1.2l0 -468.7l-350 0l0.2 189.3l0.5 48.7l0.8 37.9l1.4 32.5l2 27l2.7 21.7l1.8 10.8l2.4 10.8l2.9 10.8l3.9 10.8l2.3 5.5l4.5 8.7l5.4 8.3l5.4 6.6l5.4 5.5l5.4 4.6l10.9 7.4l5.4 2.8l5.4 2.7l10.8 4.3l21.6 6.1l16.3 2.7z"/><path fill="#00afff" d="M5.4 541l535.6 0l0 -47.5l-135.2 -0.8l-129.9 -2.1l-86.5 -0.1l-21.7 -0.6l-16.2 -1.5l-9.4 -1.5l-6.9 -1.6l-10.8 -3.7l-10.8 -5.7l-5.4 -4l-6.8 -6.6l-4.5 -5.5l-6.5 -10.8l-3.8 -8.1l-5.5 -16l-5.4 -25l-2.7 -21.2l-2.6 -27.1l-2.2 -48.6l-1.4 -65l-0.6 -86.5l-0.3 -151.5l-65.9 0l0 541l5.4 0zM389.5 454.5l54.1 0.3l97.4 -0.2l0 -454.6l-346.8 0l0.4 200.2l0.8 54.1l1.3 37.8l2.2 32.5l3.3 27l1.9 10.9l2.5 10.8l3.1 10.8l4.2 10.8l2.5 5.4l5.4 9.3l5.4 7.2l5.4 5.8l5.4 4.7l5.5 4l5.4 3.3l10.8 5.1l5.4 2.1l10.8 3.3l10.8 2.5l16.3 2.6l10.8 1.2l32.4 2.1l43.3 1z"/><path fill="#00bfff" d="M5.4 541l535.6 0l0 -41.4l-119 -0.5l-92 -1.1l-129.8 -3.1l-32.5 -1.4l-10.8 -1.1l-10.8 -1.7l-10.9 -2.4l-10.8 -3.7l-6.4 -3.1l-8.5 -5.4l-6.7 -5.8l-4.4 -5l-6.4 -9.2l-5.4 -10.6l-4.7 -12.7l-1.6 -5.4l-3.9 -16.2l-1.9 -10.9l-2.9 -21.6l-2 -21.6l-2.4 -48.7l-1.5 -65l-0.7 -91.9l-0.2 -151.5l-64.8 0l0 541l5.4 0zM335.4 443.9l27.1 1.2l37.8 0.8l140.7 0.3l0 -446.2l-343.5 0l0.3 189.3l0.6 48.7l1.1 37.9l1.8 32.5l2.7 27l3.6 21.7l4.1 16.2l3.8 10.8l2.4 5.4l3.9 7.6l5.4 8.2l5.4 6.4l5.4 5.2l5.5 4.2l5.4 3.6l10.8 5.4l5.4 2.1l16.2 4.8l10.8 2.2l10.9 1.7l16.2 1.8l16.2 1.2z"/><path fill="#00cfff" d="M5.4 541l535.6 0l0 -36.7l-124.4 -0.5l-81.2 -0.9l-108.2 -3.1l-32.4 -1.3l-21.7 -1.3l-16.2 -1.8l-10.8 -1.7l-10.9 -2.6l-10.8 -3.7l-10.8 -5.5l-5.4 -3.8l-5.4 -4.7l-5.4 -6l-5.4 -7.5l-5.4 -10.1l-5.5 -13.9l-2.3 -8.5l-3.1 -12.3l-3.3 -20.2l-2.1 -16l-1.8 -21.8l-2.2 -43.3l-1.5 -59.5l-0.7 -92l-0.3 -162.3l-63.8 0l0 541l5.4 0zM384.1 438.3l54.1 0.6l102.8 0.1l0 -439l-340.3 0l0.4 189.4l0.8 54l1.4 37.9l2.3 32.5l3.4 27l2.1 10.8l2.6 10.9l2.7 8.7l2.8 7.5l2.6 5.8l5.4 9.5l5.4 7.3l5.4 5.8l5.5 4.7l5.4 3.9l5.4 3.2l5.4 2.7l10.8 4.3l10.8 3.1l10.8 2.4l21.7 3.2l32.4 2.5l37.9 1.2z"/><path fill="#00dfff" d="M5.4 541l535.6 0l0 -32.9l-129.8 -0.5l-92 -1.3l-92 -2.8l-48.7 -2.9l-16.2 -1.6l-10.8 -1.5l-10.8 -2.3l-10.9 -3l-10.8 -4.6l-5.4 -3l-5.4 -3.6l-5.4 -4.6l-5.4 -5.7l-5.4 -7.4l-5.4 -9.5l-5.5 -13.1l-3.9 -13.3l-2.5 -10.8l-3.6 -21.7l-1.9 -16.2l-1.8 -21.6l-2.5 -49l-1.2 -59.2l-0.6 -92l-0.3 -156.9l-62.8 0l0 541l5.4 0zM313.8 427.7l16.2 1.6l16.2 1.1l37.9 1.4l59.5 0.7l97.4 0.2l0 -432.7l-337.1 0l0.3 167.7l0.5 48.7l0.9 37.9l1.6 32.4l2.2 27.1l3 21.6l4 18.9l2.4 8.2l3 8.5l3.5 7.7l2.9 5.4l4.4 6.9l5.4 6.6l5.5 5.2l5.4 4.3l10.8 6.6l6.4 2.9l9.8 3.6l16.2 4.1l21.7 3.4z"/><path fill="#00efff" d="M5.4 541l535.6 0l0 -29.7l-140.7 -0.6l-91.9 -1.2l-64.9 -2.1l-37.9 -1.9l-27.1 -2l-16.2 -1.8l-16.2 -2.7l-10.9 -2.6l-10.8 -3.7l-10.8 -5.4l-5.4 -3.7l-5.4 -4.4l-5.4 -5.5l-5.4 -7.1l-6.9 -12.2l-4 -9.3l-5.4 -17.7l-3.3 -16.2l-2.1 -12.6l-3.6 -36.1l-2.4 -43.3l-1.4 -64.9l-0.8 -92l-0.2 -162.3l-61.9 0l0 541l5.4 0zM324.6 422.5l32.5 2.3l37.8 1.2l54.1 0.6l92 0.2l0 -426.8l-333.9 0l0.4 167.7l0.6 48.7l1 37.9l1.7 32.4l2.6 27.1l3.3 21.6l3.8 16.2l1.6 5.5l4.1 10.8l6.4 12.4l5.4 7.6l5.5 6l5.4 4.8l5.4 4l10.8 6.1l5.6 2.4l10.6 3.6l10.8 2.8l10.9 2.1l21.6 2.8z"/><path fill="#00ffff" d="M5.4 541l535.6 0l0 -26.7l-129.8 -0.4l-92 -1.2l-75.7 -2.4l-32.5 -1.6l-21.6 -1.6l-21.7 -2.2l-12.7 -1.8l-14.3 -2.9l-10.9 -3.1l-10.8 -4.4l-5.4 -3l-5.4 -3.5l-5.4 -4.3l-5.4 -5.3l-5.4 -6.8l-6 -10l-4.9 -10.5l-5.4 -16.6l-5.5 -26.9l-2.7 -21.7l-1.9 -21.6l-1.3 -21.7l-1.1 -27l-1.4 -64.9l-0.6 -92l-0.3 -156.9l-60.9 0l0 541l5.4 0zM330 417.1l32.5 2.2l37.8 1.2l54.1 0.6l86.6 0.1l0 -421.2l-330.6 0l0.4 167.7l0.5 43.3l1.1 37.9l1.7 32.4l2.3 25.1l3.6 23.6l3.8 16.2l3.4 10.5l2.4 5.8l3 6.5l5.4 9l5.5 6.9l5.4 5.4l5.4 4.5l5.4 3.6l10.8 5.7l5.4 2.2l10.8 3.5l10.8 2.6l10.9 2l21.6 2.7z"/><path fill="#10ffef" d="M5.4 541l535.6 0l0 -24.2l-140.7 -0.5l-91.9 -1.1l-59.5 -1.9l-32.5 -1.7l-27 -2l-16.3 -1.6l-21.6 -3.2l-10.8 -2.3l-10.9 -3.2l-5.4 -1.9l-10.8 -5.2l-7.7 -5.3l-8.5 -7.7l-5.4 -6.5l-5.4 -8.4l-5.5 -11.1l-5.4 -15.6l-3.7 -15.6l-2.1 -10.8l-2.9 -21.7l-2.1 -21.4l-2.5 -48.9l-1.5 -64.9l-0.7 -92l-0.3 -162.3l-59.9 0l0 541l5.4 0zM330 411.4l32.5 2.4l37.8 1.2l54.1 0.7l86.6 0.2l0 -415.9l-327.3 0l0.4 162.3l0.5 43.3l1.1 37.8l1.7 32.5l2.5 27.1l3.4 21.6l3.8 16.2l5.5 15.9l5.7 11.2l5.2 7.6l5.4 6.2l5.4 5.1l5.4 4.1l10.8 6.2l7.4 3.2l8.8 3.1l10.8 2.9l10.9 2.1l21.6 3z"/><path fill="#20ffdf" d="M5.4 541l535.6 0l0 -21.7l-135.2 -0.5l-86.6 -1l-70.3 -2.1l-32.5 -1.6l-21.6 -1.7l-34.6 -3.9l-14.1 -2.6l-11.3 -2.8l-10.4 -3.6l-10.8 -5.1l-5.4 -3.4l-5.4 -4l-5.8 -5.5l-5 -5.9l-6.6 -10.3l-4.3 -8.5l-5.4 -14.7l-3.7 -14.7l-2.3 -10.8l-3.1 -21.7l-2.2 -21.6l-2.7 -48.7l-1.7 -70.3l-0.7 -86.6l-0.2 -167.7l-59.1 0l0 541l5.4 0zM330 405.8l32.5 2.6l37.8 1.4l54.1 0.7l86.6 0.3l0 -410.8l-324.1 0l0.5 156.9l0.5 43.3l1.1 37.8l1.7 32.5l2.5 27.1l3.4 21.6l3.8 16.2l2.2 7.3l3.5 8.9l2.5 5.5l4.9 8.5l5.7 7.7l5.1 5.3l6.6 5.5l9.6 6.1l5.4 2.7l10.8 4.2l10.8 3.1l10.9 2.4l21.6 3.2z"/><path fill="#30ffcf" d="M5.4 541l535.6 0l0 -19.6l-156.9 -0.5l-97.4 -1.5l-37.8 -1.4l-32.5 -1.8l-29.6 -2.2l-19.1 -2.3l-21.6 -3.7l-10.9 -2.7l-10.8 -3.7l-8.6 -3.9l-7.6 -4.4l-8.1 -6.4l-5.3 -5.4l-2.8 -3.3l-5.3 -7.5l-3 -5.4l-2.7 -5.5l-6.1 -16.2l-4.2 -16.2l-2 -10.8l-3.2 -21.7l-2.1 -21.6l-2.7 -48.7l-1.5 -59.5l-0.7 -97.4l-0.3 -167.7l-58.2 0l0 541l5.4 0zM335.4 400.9l32.5 2.5l37.9 1.4l54 0.7l81.2 0.2l0 -405.7l-320.7 0l0.4 151.5l0.5 43.3l1.1 37.8l1.7 32.5l2.5 27l3.4 21.7l3.7 16.2l4.4 13.3l3.8 8.3l2.9 5.5l4.2 6.3l5.4 6.7l5.4 5.2l5.4 4.3l10.8 6.5l7.5 3.4l8.7 3.1l10.9 3l10.8 2.2l21.6 3.1z"/><path fill="#40ffbf" d="M5.4 541l535.6 0l0 -17.5l-156.9 -0.6l-92 -1.3l-64.9 -2.5l-32.4 -2.4l-25.8 -2.7l-17.5 -2.9l-10.8 -2.3l-10.9 -3.2l-6.7 -2.5l-9.5 -4.4l-9.8 -6.4l-6.4 -5.5l-4.8 -5.3l-6 -8.2l-5.5 -9.8l-5.4 -13.2l-3.5 -12.1l-2.6 -10.8l-3.7 -21.6l-2 -16.3l-1.8 -21.6l-2.5 -48.7l-1.3 -59.5l-0.6 -92l-0.3 -167.7l-57.4 0l0 541l5.4 0zM443.6 400.4l97.4 0.4l0 -400.8l-317.4 0l0.2 108.2l0.5 64.9l1.1 48.7l1.9 37.9l1.4 16.2l1.8 16.2l3.7 21.7l2.7 10.8l3.5 10.8l3.1 7.7l4.4 8.5l6.4 9.5l5.4 6.1l5.4 4.8l5.4 4l5.4 3.3l9.9 4.8l6.3 2.4l10.9 3.3l10.8 2.4l10.8 1.9l16.2 2l16.3 1.4l37.8 1.9l48.7 1z"/><path fill="#50ffaf" d="M5.4 541l535.6 0l0 -15.5l-156.9 -0.5l-86.6 -1.3l-37.8 -1.2l-37.9 -1.8l-21.6 -1.5l-27.1 -2.9l-16.7 -2.3l-15.7 -3.4l-10.9 -3.1l-10.8 -4.1l-10.5 -5.7l-5.7 -4l-5.4 -4.7l-5.4 -5.8l-5.4 -7.2l-6.1 -10.7l-4.8 -11.3l-4.7 -15.8l-3.5 -16.2l-2.6 -15.5l-1.9 -17l-1.8 -21.6l-2.3 -43.3l-1.4 -70.3l-0.7 -92l-0.2 -162.3l-56.6 0l0 541l5.4 0zM416.6 395l48.7 0.6l75.7 0.3l0 -395.9l-314 0l0.6 162.3l1 48.7l1.7 37.9l2.3 27.6l2 15.6l1.9 10.9l2.3 10.8l3 10.8l1.8 5.4l4.5 10.8l6.2 10.7l4.1 5.6l5 5.4l6.1 5.4l6.4 4.5l5.4 3.1l6.9 3.2l9.3 3.5l10.9 3.1l10.8 2.3l21.6 3.2l32.5 2.6l43.3 1.6z"/><path fill="#60ff9f" d="M5.4 541l535.6 0l0 -13.8l-156.9 -0.5l-92 -1.2l-27 -0.8l-32.5 -1.5l-32.4 -2.2l-21.7 -2.1l-16.2 -2.2l-15.3 -2.7l-11.8 -3l-10.8 -3.5l-10.8 -4.9l-8 -4.9l-8.2 -6.5l-5.4 -5.6l-5.4 -7.1l-5.5 -9l-5.4 -12.1l-5.4 -17.1l-2.8 -12.9l-2.9 -16.2l-2.5 -21.7l-1.9 -21.6l-1.2 -21.7l-1.1 -27l-1.2 -64.9l-0.7 -92l-0.2 -162.3l-55.8 0l0 541l5.4 0zM400.3 389.6l54.1 1.1l86.6 0.4l0 -391.1l-310.6 0l0.7 156.9l0.8 43.3l1.5 37.8l2.6 32.5l2.8 21.6l2.1 10.9l2.6 10.7l5.4 16.3l5.2 10.8l3.4 5.4l4 5.4l4.8 5.5l4.2 3.9l5.4 4.2l5.4 3.4l10.8 5.4l10.9 4l10.8 2.9l10.8 2.2l10.8 1.7l27.1 2.8l37.8 2z"/><path fill="#70ff8f" d="M5.4 541l535.6 0l0 -12l-156.9 -0.5l-92 -1.3l-64.9 -2.4l-27 -2l-27.1 -2.8l-16.2 -2.5l-16.2 -3.3l-10.9 -3.1l-7.2 -2.6l-9 -4l-10.8 -6.7l-5.4 -4.5l-5.4 -5.5l-5.4 -6.8l-6.3 -10.3l-4.6 -10l-5.4 -16.2l-3.9 -17.1l-1.9 -10.8l-2.8 -21.7l-2.2 -24.2l-2.4 -51.5l-1.3 -64.9l-0.6 -92l-0.2 -162.3l-55 0l0 541l5.4 0zM389.5 384.2l59.5 1.6l92 0.5l0 -386.3l-307.1 0l0.6 151.5l0.8 43.3l1.6 37.8l1.9 27.1l3.4 27l2 10.9l2.6 10.8l2.1 7l3.3 9.2l2.4 5.4l5.1 9.4l4.8 6.8l4.8 5.4l5.9 5.5l6.1 4.5l11.4 6.3l4.8 2.1l10.9 3.7l10.8 2.8l10.8 2.1l10.8 1.7l16.3 1.8l32.4 2.1z"/><path fill="#80ff80" d="M5.4 541l535.6 0l0 -10.3l-156.9 -0.5l-81.1 -1l-37.9 -1.1l-32.5 -1.4l-29.8 -1.9l-18.9 -1.9l-21.6 -2.8l-10.8 -1.8l-16.3 -3.8l-10.8 -3.5l-6.1 -2.5l-10.4 -5.4l-7.6 -5.4l-8.3 -7.7l-5.4 -6.6l-5.5 -8.4l-5.4 -11.2l-5.4 -15.3l-3.8 -15.7l-2.1 -10.8l-3 -21.7l-1.9 -18.4l-1.6 -24.8l-1.2 -27.1l-1.5 -64.9l-0.8 -97.4l-0.2 -167.7l-54.2 0l0 541l5.4 0zM384.1 379l27.1 1.1l32.4 0.7l97.4 0.7l0 -381.5l-303.6 0l0.6 146.1l0.8 43.2l1.6 37.9l2.4 32.5l2.9 21.6l2 10.8l2.5 10.9l5.3 16.2l4.2 9.2l4.1 7l3.8 5.4l4.7 5.4l5.7 5.4l7.3 5.5l6.8 3.9l5.4 2.6l5.5 2.2l10.8 3.6l17 3.9l10 1.6l16.3 2l27 2.1z"/><path fill="#8fff70" d="M5.4 541l535.6 0l0 -8.8l-151.5 -0.4l-92 -1.1l-59.5 -2.1l-27 -1.7l-25.7 -2.1l-17.6 -2.3l-16.2 -2.6l-10.8 -2.4l-12.6 -3.5l-13.4 -5.5l-6.5 -3.5l-5.4 -3.5l-4.9 -3.8l-5.9 -5.6l-5.4 -6.4l-6.2 -9.6l-4.7 -9.3l-5.4 -14.7l-3.6 -13.9l-2.3 -10.8l-3.2 -21.6l-2.3 -21.7l-2.8 -48.7l-1.7 -70.3l-0.7 -92l-0.2 -173.1l-53.5 0l0 541l5.4 0zM378.7 373.6l27.1 1.4l32.4 0.9l102.8 0.8l0 -376.7l-300.1 0l0.7 146.1l0.9 43.3l1.4 32.4l1.9 27.1l3.3 27l4.5 21.7l5.2 16.2l6.3 13.1l5.4 8.2l4.8 5.7l6 5.8l5.4 4.2l10.8 6.3l5.5 2.5l10.8 3.9l16.2 4.1l21.7 3.5l27 2.5z"/><path fill="#9fff60" d="M5.4 541l535.6 0l0 -7.3l-151.5 -0.4l-92 -1.2l-60.4 -1.9l-26.1 -1.7l-27.1 -2.4l-16.2 -2l-21.6 -3.8l-10.9 -2.6l-10.8 -3.4l-10.8 -4.6l-10.8 -6.4l-5.4 -4.2l-7 -6.8l-4.5 -5.4l-4.8 -7l-2.1 -3.8l-3.3 -6.5l-5.7 -15.2l-5.1 -19.4l-2.3 -13l-3.1 -22.3l-1.8 -21l-2.6 -48.7l-1.4 -59.5l-0.7 -97.4l-0.2 -173.1l-52.8 0l0 541l5.4 0zM373.3 368.1l27 1.7l32.5 1.1l43.3 0.7l64.9 0.3l0 -371.9l-296.5 -0l0.7 140.7l0.9 43.2l1.4 32.5l1.9 27l2.5 21.7l3.9 21.6l4.5 16.3l4.2 10.8l2.7 5.4l3.3 5.8l5.4 7.5l5.4 5.9l5.4 4.8l5.4 3.9l5.4 3.3l5.5 2.7l10.8 4.4l16.2 4.5l21.7 3.8l21.6 2.3z"/><path fill="#afff50" d="M5.4 541l535.6 0l0 -5.8l-151.5 -0.4l-92 -1.2l-37.8 -1.1l-32.5 -1.4l-21.6 -1.4l-21.7 -2.1l-21.6 -2.7l-10.8 -2l-16 -3.5l-11.1 -3.6l-10.8 -4.5l-5.4 -2.8l-5.4 -3.5l-9.1 -7.3l-5.1 -5.4l-7.5 -10l-5.4 -10l-5.4 -13.4l-2.9 -9.9l-2.7 -10.8l-3.8 -21.6l-2.1 -16.3l-1.9 -21.6l-1.7 -27.1l-1.1 -27l-1.1 -59.5l-0.7 -97.4l-0.2 -167.7l-52.1 0l0 541l5.4 0zM373.3 362.9l27 1.9l32.5 1.2l43.3 0.7l64.9 0.4l0 -367.1l-292.8 0l0.6 135.2l1 43.3l1.3 32.5l1.9 27l2.5 21.7l3.8 21.6l4.5 16.3l1.9 5.4l4.8 10.7l6.8 10.9l4 5.1l5.4 5.5l5.4 4.5l5.4 3.7l5.5 3.1l10.8 4.8l16.2 5l10.8 2.3l10.9 1.8l21.6 2.5z"/><path fill="#bfff40" d="M5.4 541l535.6 0l0 -4.5l-146.1 -0.3l-86.5 -0.9l-64.9 -2l-32.5 -1.8l-21.6 -1.8l-21.7 -2.7l-14.5 -2.2l-18 -4.1l-10.8 -3.4l-10.8 -4.4l-10.8 -6.2l-5.4 -3.9l-5.4 -4.9l-5.2 -5.6l-5.7 -7.8l-5.4 -9.6l-5.4 -12.9l-5.4 -18.4l-3.2 -16.2l-2.2 -13.9l-2 -18.6l-1.8 -21.6l-2.1 -43.3l-1.4 -70.3l-0.6 -92l-0.2 -167.7l-51.4 0l0 541l5.4 0zM367.9 357.2l27 2.2l37.9 1.6l43.3 0.8l64.9 0.4l0 -362.2l-289.1 0l0.7 129.8l0.9 43.3l1.3 32.5l1.9 27l3 25.6l3.3 17.7l4.4 16.2l3.1 8.6l3.5 7.7l6.6 10.8l6.1 7.4l5.4 5.2l5.4 4.2l10.9 6.4l8.7 3.8l7.5 2.6l10.8 3l10.8 2.3l21.7 3.1z"/><path fill="#cfff30" d="M5.4 541l535.6 0l0 -3.2l-156.9 -0.4l-92 -1.1l-27.6 -0.7l-31.9 -1.4l-27 -1.8l-21.7 -1.9l-21.6 -2.8l-16.2 -2.9l-10.9 -2.7l-10.8 -3.2l-10.8 -4.5l-10.8 -6l-7 -5.3l-3.8 -3.4l-5.4 -5.8l-5.5 -7.2l-6 -10.6l-4.8 -11.1l-4.9 -16l-3.6 -16.2l-2.3 -13.3l-2.3 -19.2l-1.9 -21.6l-1.2 -18.5l-1 -24.8l-1.5 -70.3l-0.7 -97.4l-0.2 -167.7l-50.7 0l0 541l5.4 0zM492.3 357.1l48.7 0.2l0 -357.3l-285.3 0l0.3 86.6l0.7 59.5l1.3 43.2l2 32.5l1.5 16.2l2.1 16.3l1.9 10.8l2.4 10.8l2.6 9.3l2.4 6.9l3 7.4l5.4 10.1l5.4 7.7l5.4 6l5.4 4.9l5.5 4l5.4 3.3l10.8 5.2l10.8 3.7l10.8 2.9l10.8 2.1l15 2.2l28.3 2.7l43.3 1.9l54.1 0.9z"/><path fill="#dfff20" d="M5.4 541l535.6 0l0 -1.9l-167.7 -0.5l-92 -1.3l-48.7 -1.7l-43.2 -3.2l-19.5 -2.2l-18.4 -3l-11.6 -2.4l-15.5 -4.5l-10.8 -4.4l-10.8 -6l-9 -6.8l-7.2 -7.3l-5.5 -7.1l-5.4 -9l-5.4 -11.9l-5.4 -16.8l-2.9 -12.8l-2.9 -16.2l-2.6 -21.7l-2 -21.6l-2.3 -48.7l-1.3 -64.9l-0.7 -97.4l-0.2 -167.7l-50 0l0 541l5.4 0zM465.3 351.7l75.7 0.7l0 -352.4l-281.5 0l0.3 81.1l0.7 59.6l1.4 43.2l1.9 32.5l2.9 27l3.8 22.2l2.6 10.3l3.5 10.8l4.6 10.9l3 5.4l3.4 5.4l4.5 5.8l5.4 5.7l5.7 4.7l8.2 5.4l7.8 4l10.8 4.2l8.7 2.6l13 3l10.8 1.8l27 3l32.5 2l43.3 1.1z"/><path fill="#efff10" d="M5.4 541l535.6 0l0 -0.6l-151.5 -0.4l-86.5 -0.9l-65 -2l-26.5 -1.5l-16.7 -1.4l-21.7 -2.3l-16.2 -2.4l-21.7 -4.5l-10.8 -3.4l-10.8 -4.3l-10.8 -5.8l-5.4 -3.8l-5.4 -4.5l-5.4 -5.5l-5.5 -6.9l-5.7 -9.3l-5.1 -11l-5.4 -16l-3.8 -16.3l-2 -10.8l-2.8 -21.6l-2.2 -22.6l-2.6 -53.2l-1.3 -64.9l-0.7 -97.4l-0.2 -167.7l-49.3 0l0 541l5.4 0zM449 346.3l92 1.1l0 -347.4l-277.6 0l0.4 81.1l0.7 54.1l1.3 43.3l1.9 32.5l2.8 27l3.8 21.7l2.6 10.8l3.5 10.8l2.1 5.4l4.2 8.8l4.6 7.5l4.1 5.4l5 5.4l6.3 5.4l7.1 4.9l5.4 3l6.3 2.9l9.9 3.7l10.8 3l10.9 2.3l21.6 3.2l32.5 2.6l37.8 1.5z"/><path fill="#ffff00" d="M5.4 541l345.1 0l-74.6 -1.3l-54.1 -2.3l-26.2 -1.8l-17.1 -1.8l-21.6 -3l-10.8 -2.1l-10.9 -2.5l-10.8 -3.2l-10.8 -4.2l-10.8 -5.8l-6.4 -4.5l-4.4 -3.7l-5.4 -5.4l-5.5 -6.7l-5.4 -8.5l-5.4 -11.1l-4.7 -13.3l-2.9 -10.8l-3.2 -14.4l-2.7 -18l-1.9 -16.3l-2.4 -32.4l-2 -48.7l-1.1 -64.9l-0.6 -92l-0.2 -162.3l-48.6 0l0 541l5.4 0zM443.6 341l43.3 0.9l54.1 0.4l0 -342.3l-273.5 0l0.3 75.7l0.7 54.1l1 37.9l1.8 32.5l2.5 27l3.3 21.7l2.4 10.8l3 10.8l3.9 10.8l2.5 5.4l3.2 6.2l5.4 8l5.5 6.3l5.4 5.1l5.4 4.1l5.4 3.4l9.5 4.8l6.7 2.6l10.8 3.4l10.9 2.6l21.6 3.5l27.1 2.5l37.8 1.8z"/><path fill="#ffef00" d="M5.4 541l272.6 0l-50.8 -2.1l-44.2 -3.3l-20.7 -2.7l-15.7 -2.7l-20.9 -5.4l-12.1 -4.7l-5.4 -2.6l-6.2 -3.5l-10 -7.6l-5.4 -5.3l-5.5 -6.5l-5.4 -8.2l-5.4 -10.8l-5.7 -15.8l-4.1 -16.2l-2.1 -10.8l-4.3 -32.6l-2.9 -43.1l-1.5 -43.3l-1 -59.5l-0.7 -254.3l-48 0l0 541l5.4 0zM438.2 335.5l43.3 1.1l59.5 0.6l0 -337.2l-269.5 0l0.3 70.3l0.7 54.1l1.3 43.3l1.9 32.5l2.9 27l3.7 21.7l4.4 17l3.7 10l2.4 5.4l4.7 8.5l5.5 7.6l5.4 6l5.4 4.8l5.4 3.9l5.4 3.3l7.7 3.8l8.5 3.3l16.3 4.6l21.6 3.9l27.1 2.7l32.4 1.8z"/><path fill="#ffdf00" d="M5.4 541l238.2 0l-27.2 -1.5l-21.6 -1.7l-21.7 -2.2l-10.8 -1.5l-16.2 -2.9l-10.9 -2.4l-10.8 -3.2l-10.8 -4.2l-5.4 -2.5l-8.4 -4.9l-7.2 -5.5l-6 -5.7l-5.5 -6.4l-6.2 -9.5l-4.6 -9l-4.9 -12.6l-3.1 -10.9l-2.8 -11.5l-2.7 -15.5l-2.2 -16.2l-2.8 -32.5l-1.9 -37.9l-1.2 -40.9l-0.7 -61.9l-0.6 -238l-47.4 0l0 541l5.4 0zM438.2 330.1l43.3 1.2l59.5 0.6l0 -331.9l-265.3 0l0.4 70.3l0.7 54.1l1.2 37.9l1.9 32.5l2.8 27l3.7 21.6l2.7 10.9l3 9.9l5.4 12.9l5.6 9.6l5.3 6.9l5.4 5.7l5.4 4.6l6.6 4.5l9.6 5.1l5.4 2.3l10.1 3.4l6.2 1.7l10.8 2.4l10.8 1.8l27.1 3.1l32.4 1.9z"/><path fill="#ffcf00" d="M5.4 541l215.7 0l-20.9 -1.5l-21.7 -2.1l-14.4 -1.8l-12.6 -2.1l-10.8 -2.2l-10.9 -2.8l-10.8 -3.5l-10.8 -4.8l-10.5 -6.2l-5.7 -4.5l-5.4 -5.1l-5.5 -6.2l-5.4 -7.9l-4.7 -8.8l-6.1 -15l-5.4 -19.8l-2.6 -13.9l-2.8 -19.3l-3 -34.8l-1.9 -37.9l-1.1 -43.2l-0.8 -65l-0.5 -232.6l-46.8 0l0 541l5.4 0zM438.2 324.6l43.3 1.4l59.5 0.6l0 -326.6l-261 0l0.4 70.3l0.7 48.7l1.2 37.9l1.9 32.4l2.8 27.1l3.7 21.6l4.2 16.3l2.6 7.6l3.7 8.6l2.9 5.4l4.3 6.9l5.4 6.7l5.4 5.5l5.4 4.4l5.4 3.6l10.2 5.4l6 2.5l8.7 2.9l7.6 2l10.8 2.4l10.8 1.8l27.1 3l27 1.6z"/><path fill="#ffbf00" d="M5.4 541l199.1 0l-36.8 -3.8l-11.1 -1.6l-15.9 -3.2l-10.9 -2.7l-10.8 -3.5l-5.4 -2.2l-10.8 -5.4l-7 -4.6l-9.2 -8l-5.5 -6.1l-5.3 -7.6l-5.5 -9.9l-2.7 -6.3l-2.7 -6.9l-2.8 -9.4l-4 -16.2l-4.3 -27l-3 -32.5l-2.1 -38.2l-1.2 -48.3l-0.8 -65l-0.5 -232.6l-46.2 0l0 541l5.4 0zM443.6 319.3l43.3 1.3l54.1 0.6l0 -321.2l-256.6 0l0.4 64.9l0.7 48.7l1.2 37.9l1.9 32.4l2.8 27.1l3.7 21.6l4.2 16.3l3.7 10.2l2.7 6l2.7 5.4l5.4 8.2l5.4 6.5l5.4 5.2l5.4 4.3l5.4 3.5l9.2 4.8l7.1 2.8l7.7 2.6l8.5 2.3l10.8 2.2l10.8 1.8l27.1 2.9l27 1.7z"/><path fill="#ffaf00" d="M5.4 541l186 0l-23.7 -2.7l-16.2 -2.5l-21.7 -4.9l-10.8 -3.5l-6.5 -2.6l-9.7 -4.9l-5.4 -3.5l-5.4 -4l-5.4 -4.9l-5.5 -6l-6.4 -9.2l-4.4 -7.8l-5.4 -12.7l-5.2 -17.4l-5.2 -27l-2.5 -21.6l-2.6 -32.5l-1.6 -37.9l-1.1 -48.7l-0.6 -59.5l-0.5 -227.2l-45.6 0l0 541l5.4 0zM449 313.8l37.9 1.2l54.1 0.6l0 -315.6l-252.1 0l0.4 64.9l0.8 48.7l1.3 37.9l1.7 27l2.8 27.1l3.7 21.6l4.3 16.2l3.9 10.9l2.4 5.4l6.2 10.8l4 5.4l4.9 5.4l4.7 4.3l5.4 4.1l5.4 3.5l10.8 5.3l16.3 5.5l10.8 2.5l10.8 2l27.1 3.2l32.4 2.1z"/><path fill="#ff9f00" d="M5.4 541l175.2 0l-29.1 -4.1l-10.8 -2.2l-10.9 -2.7l-10.8 -3.5l-9.2 -3.7l-7 -3.7l-5.4 -3.3l-5.4 -3.9l-5.9 -5.4l-5 -5.3l-5.4 -7.3l-5.4 -9.3l-4.6 -10.5l-6.2 -19.3l-2.9 -13.2l-2.5 -14.1l-2.8 -23.7l-2.6 -33l-1.5 -37.4l-1.1 -48.7l-0.6 -59.5l-0.4 -227.2l-45.1 0l0 541l5.4 0zM459.9 308.4l37.9 1l43.3 0.6l0 -310l-247.4 0l0.4 64.9l0.9 48.7l1.4 37.9l1.9 27l3.2 27.1l1.8 10.8l2.4 10.8l4.8 16.2l3.4 8.3l4.1 8l3.3 5.4l4.1 5.4l4.7 5.3l5.4 4.8l5.4 4l5.4 3.3l8.5 4.2l7.8 3.1l16.2 4.6l21.6 4l27.1 2.8l32.4 1.8z"/><path fill="#ff8f00" d="M5.4 541l166.1 0l-14.6 -2.1l-16.2 -3l-10.9 -2.8l-9.5 -2.9l-13 -5.4l-9.6 -5.4l-5.7 -4.2l-5.4 -4.7l-5.5 -5.8l-5.4 -7l-5.4 -9.2l-5.6 -12.4l-3.6 -10.8l-2.9 -10.9l-4.1 -20.4l-3.5 -28.2l-2.2 -27.1l-1.8 -43.3l-1.1 -48.7l-0.6 -59.5l-0.4 -227.2l-44.5 0l0 541l5.4 0zM476.1 303l64.9 1.1l0 -304.1l-242.7 0l0.5 64.9l1 48.7l1.6 37.9l2.1 27l2.7 21.7l1.8 10.8l2.4 10.8l4.9 16.2l3.9 9.3l3.7 7l3.4 5.4l4.1 5.4l5 5.5l6.2 5.3l8 5.4l7.5 4l5.4 2.3l10.8 3.8l10.8 2.8l10.8 2.2l21.7 3l27 2.2l32.5 1.4z"/><path fill="#ff8000" d="M5.4 541l158.4 0l-12.3 -2l-16.3 -3.3l-16.2 -4.8l-10.8 -4.5l-5.4 -2.8l-6.9 -4.2l-7 -5.5l-5.6 -5.4l-4.7 -5.4l-3.9 -5.4l-4.4 -7.2l-5.4 -11.7l-2.9 -8.1l-2.5 -7.9l-3.3 -13.8l-2.1 -10.7l-1.6 -10.9l-3.5 -32.5l-1.7 -27l-1.5 -37.9l-1 -48.7l-0.5 -59.5l-0.4 -221.8l-43.9 0l0 541l5.4 0zM503.1 297.6l37.9 0.6l0 -298.2l-237.8 0l0.6 64.9l0.9 43.3l1.7 37.9l2.1 27l3.6 27.1l2.1 10.8l2.7 10.8l2.3 7.4l3.4 8.8l2.5 5.4l4.9 8.6l5.4 7.3l5.4 5.8l5.4 4.7l5.5 3.8l5.4 3.2l9.4 4.5l6.8 2.5l10.8 3.3l10.8 2.4l10.9 1.9l27 3.1l32.5 2l37.8 1.1z"/><path fill="#ff7000" d="M5.4 541l151.5 0l-16.2 -3.1l-9.9 -2.3l-16.6 -5.4l-11.4 -5.3l-5.4 -3.3l-5.4 -3.8l-5.4 -4.5l-5.5 -5.5l-5.4 -6.9l-5.4 -8.5l-2.7 -5.5l-2.7 -5.8l-5.4 -15.5l-4 -16.6l-3.7 -21.6l-3.1 -27.9l-2 -31.6l-1.6 -43.3l-0.9 -48.7l-0.5 -59.5l-0.4 -216.4l-43.3 0l0 541l5.4 0zM422 286.8l21.6 2l27.1 1.6l32.4 1l37.9 0.6l0 -292l-232.7 0l1.2 92l1.1 32.4l1.6 27.1l2 21.6l3.1 21.7l3.4 16.2l5.1 16.2l4.7 10.8l6.6 10.9l4.3 5.4l4.8 5l5.5 4.6l5.4 3.8l10.8 5.9l5.4 2.3l10.8 3.6l16.2 4l21.7 3.3z"/><path fill="#ff6000" d="M5.4 541l145.5 0l-10.2 -2.1l-13.7 -3.3l-15.4 -5.4l-8.8 -4.2l-5.4 -3.2l-5.4 -3.7l-6.2 -5.1l-4.7 -4.8l-5.4 -6.6l-5.4 -8.5l-3.6 -7.2l-2.5 -5.4l-4.7 -13.3l-5.4 -22.3l-3.6 -23.9l-2.3 -21.7l-2.1 -32.4l-1.6 -43.3l-1.3 -97.4l-0.4 -227.2l-42.8 0l0 541l5.4 0zM438.2 281.7l21.6 1.6l21.7 1l59.5 1.4l0 -285.7l-227.5 0l0.6 54.1l0.9 43.3l1.4 32.4l2 27.1l2.5 21.6l3.7 20.7l4.8 17.2l4.2 10.8l5.7 10.8l3.7 5.4l4.4 5.5l4.3 4.3l5.4 4.5l5.4 3.8l6.1 3.6l10.1 4.6l5.4 1.9l15.5 4.3l17 3.2l21.6 2.6z"/><path fill="#ff5000" d="M5.4 541l140.2 0l-21.2 -5.1l-15.4 -5.7l-11.6 -6.2l-6.7 -4.6l-6.2 -5.4l-5.1 -5.5l-4.3 -5.4l-4.8 -7.3l-4.6 -8.9l-6.2 -16.1l-5.5 -21.8l-4.2 -27l-2.2 -21.7l-2.1 -32.4l-1.6 -43.3l-0.7 -37.9l-0.6 -64.9l-0.4 -221.8l-42.2 0l0 541l5.4 0zM454.4 276.1l37.9 2l48.7 1l0 -279.1l-222 0l0.6 54.1l0.9 37.9l1.4 32.4l2 27.1l2.6 21.6l4 21.7l4.6 16.2l5.7 13.6l4.6 8l3.9 5.4l7.8 8.7l5.4 4.5l5.4 3.8l10.8 5.9l10.7 4.2l5.5 1.7l16.3 3.9l21.6 3.3l21.6 2.1z"/><path fill="#ff4000" d="M5.4 541l135.3 0l-20.3 -5.4l-13.7 -5.4l-9.3 -5l-5.4 -3.7l-5.4 -4.3l-5.5 -5.2l-5.4 -6.4l-5.3 -7.9l-5.5 -10.5l-6.1 -16.5l-3 -10.9l-2.4 -10.8l-4.3 -27l-2.1 -21.7l-2.1 -32.4l-1.6 -43.3l-1.2 -108.2l-0.4 -216.4l-41.7 0l0 541l5.4 0zM481.5 270.7l59.5 1.7l0 -272.4l-216.4 0l0.7 54.1l1 37.9l1.6 32.4l2.2 27.1l3 21.6l2.1 10.8l2.6 10.9l3 9.7l2.5 6.5l5.3 10.8l3.3 5.4l5.2 6.9l5.4 5.7l4.2 3.6l6.6 4.8l5.4 3.2l10.8 5l9.6 3.3l6.7 1.8l10.8 2.5l10.8 1.8l27 3.1l27.1 1.8z"/><path fill="#ff3000" d="M5.4 541l131 0l-19 -5.4l-14.6 -6.3l-7.8 -4.5l-7.4 -5.4l-6.5 -6l-4.2 -4.9l-7.4 -10.8l-4.6 -8.6l-3.1 -7.6l-2.3 -6l-3 -10.2l-2.4 -9.4l-2.4 -12.3l-3 -20.1l-2.7 -28.6l-1.9 -32.4l-1.3 -37.9l-1.2 -108.2l-0.4 -216.4l-41.2 0l0 541l5.4 0zM530.2 265.1l10.8 0.2l0 -265.3l-210.5 0l0.7 54.1l1.2 37.9l1.8 32.4l2.6 27.1l4 24.7l4.9 18.6l6 14.9l3.6 6.7l3.5 5.4l4.2 5.4l4.9 5.2l5.4 4.7l5.4 3.9l5.4 3.2l9.8 4.7l6.4 2.3l10.9 3.3l10.8 2.4l10.8 1.9l27 3.2l32.5 2l37.9 1.1z"/><path fill="#ff2000" d="M5.4 541l127 0l-18.8 -5.8l-10.8 -4.8l-5.4 -3l-5.4 -3.5l-5.4 -4.2l-5.5 -5l-5.4 -6.2l-5.4 -7.7l-4.7 -8.5l-6.1 -14.6l-5.2 -17.9l-3.2 -16.2l-2.5 -16.2l-3.1 -32.5l-2.2 -37.6l-1 -32.7l-1.2 -108.2l-0.4 -216.4l-40.7 0l0 541l5.4 0zM465.3 254.7l32.4 2l43.3 1.3l0 -258l-204.4 0l0.6 43.3l1.1 37.8l1.7 32.5l1.8 21.6l2.9 21.7l3.1 16.2l3.9 14.1l5.4 13.9l5.4 10l5.4 7.5l5.4 6l5.4 4.8l4.4 3.2l6.4 4l5.4 2.8l10.9 4.4l10.8 3.3l7.3 1.8l19.7 3.4l21.7 2.4z"/><path fill="#ff1000" d="M5.4 541l123.3 0l-16.7 -5.4l-9.2 -4.2l-5.4 -2.9l-5.4 -3.4l-5.4 -4.2l-5.5 -5l-5.4 -6l-5.4 -7.5l-5.4 -9.7l-5.4 -12.8l-5.4 -18.2l-4.6 -23.5l-2.7 -21.6l-2.7 -32.5l-1.4 -27l-1 -37.9l-1.2 -108.2l-0.3 -211l-40.2 0l0 541l5.4 0zM497.7 249l43.3 1.4l0 -250.4l-198 0l0.7 43.3l1.2 37.8l1.5 27.1l2.6 27l3.3 21.7l3.7 16.2l5.5 16.3l6.4 12.6l6.2 9l4.8 5.4l6.1 5.4l9.9 6.8l7.9 4l8.4 3.4l16.2 4.7l16.2 3.2l27.1 3.2l27 1.9z"/><path fill="#ff0000" d="M5.4 541l119.9 0l-15.7 -5.4l-12.2 -6l-7.3 -4.8l-6.6 -5.4l-5.4 -5.5l-4.4 -5.4l-3.8 -5.4l-5 -8.7l-5.6 -12.9l-5.2 -17l-5.2 -26.3l-3.2 -27l-2.2 -27.1l-1.1 -21.6l-1.2 -43.3l-1.2 -108.2l-0.3 -211l-39.7 0l0 541l5.4 0zM465.3 238.1l32.4 2.7l43.3 1.6l0 -242.4l-191.3 0l0.8 43.3l1.1 32.4l1.6 27.1l2.1 21.6l3.1 21.7l3.4 16.2l5.2 16.2l4.8 10.8l6.6 10.9l5.7 6.8l5.4 5.3l5.2 4.1l11.1 6.6l10.8 4.7l16.2 4.9l16.2 3.2l16.3 2.3z"/><path fill="#ef0000" d="M5.4 541l116.8 0l-14.9 -5.4l-9.9 -5l-5.4 -3.4l-5.4 -4l-5.5 -4.8l-5.4 -5.8l-3.1 -4.1l-3.7 -5.4l-4 -7l-6.3 -14.6l-5 -16.2l-5.4 -27.1l-3.1 -27l-2.6 -32.5l-1.9 -64.9l-1.1 -102.8l-0.3 -211l-39.2 0l0 541l5.4 0zM508.5 232.8l32.5 1.3l0 -234.1l-184.3 0l0.9 43.3l1.4 32.4l1.8 27.1l2.4 21.6l3.7 21.7l4.2 16.2l2.2 6.5l4.1 9.7l6.1 10.8l4 5.5l4.8 5.4l8 7l5.5 3.8l5.4 3l5.4 2.7l10.8 4.2l16.2 4.4l16.2 3l21.7 2.6l27 1.9z"/><path fill="#df0000" d="M5.4 541l113.7 0l-14 -5.4l-7.7 -4l-5.4 -3.3l-5.4 -3.9l-5.8 -5l-5.1 -5.5l-5.4 -7.1l-5.4 -9.1l-2.6 -5.4l-2.8 -6.3l-3.4 -9.9l-3.2 -10.8l-5.4 -27.1l-3 -27l-2.3 -27.1l-1 -21.6l-1.2 -48.7l-1 -102.8l-0.3 -211l-38.7 0l0 541l5.4 0zM486.9 222.1l27.1 2l27 1.2l0 -225.3l-176.8 0l0.8 37.9l1.1 27l1.8 27.1l2.3 21.6l2.5 16.2l3.5 16.3l2.5 8.6l2.7 7.6l4.9 10.8l3.2 5.6l3.6 5.2l7.2 8.4l5.5 4.8l5.4 4l10.8 6.1l10.8 4.4l16.2 4.7l16.3 3.1l21.6 2.7z"/><path fill="#cf0000" d="M5.4 541l111.1 0l-13.7 -5.5l-10.8 -6.1l-5.4 -3.9l-5.5 -4.7l-5.4 -5.6l-5.4 -7l-6.3 -10.5l-5 -10.8l-5.5 -16.2l-5.9 -27.1l-0.8 -5.4l-4.6 -43.3l-0.8 -10.8l-1.9 -70.3l-1 -102.8l-0.4 -211l-38.1 0l0 541l5.4 0zM481.5 211.6l27 2.6l32.5 1.7l0 -215.9l-169 0l1 37.9l1.3 27l1.7 21.7l2.4 21.6l2.7 16.2l3 13.3l4.3 13.8l4.7 10.8l6.4 10.8l6.3 7.8l5.4 5.2l3.9 3.2l8.1 5.5l11 5.4l14.8 5.1l16.3 3.7l16.2 2.6z"/><path fill="#bf0000" d="M5.4 541l108.4 0l-11 -4.4l-10.8 -6.1l-10.9 -8.6l-5.4 -5.5l-6.3 -7.9l-6.3 -10.8l-5.1 -10.8l-3.9 -12.6l-1.6 -3.6l-3.8 -19.3l-2 -7.8l-3.4 -33.6l-1.5 -9.7l-0.8 -10.8l-1.9 -70.3l-1.1 -92l-0.7 -227.2l-37.3 0l0 541l5.4 0zM535.6 205.8l5.4 0.2l0 -206l-160.6 0l1.2 37.9l1.9 32.4l2.2 21.7l3.3 21.6l3.7 16.2l2.2 7.3l3.4 9l5.2 10.8l3.3 5.4l4 5.4l5.8 6.3l5 4.5l7.7 5.4l10.2 5.5l14.9 5.5l16.3 4l16.2 2.7l21.6 2.4l27.1 1.8z"/><path fill="#af0000" d="M5.4 541l106 0l-8.6 -3.3l-10.8 -5.9l-10.9 -8.7l-5.4 -5.5l-7.4 -9.1l-6.1 -10.8l-2.7 -6.2l-2.5 -4.6l-1.3 -5.4l-4.1 -10.8l-1.8 -10.9l-1.1 -5.2l-2 -5.6l-0.9 -5.4l-2.5 -27.9l-1.2 -4.5l-1.3 -10.9l-1.1 -27l-3 -162.3l-0.6 -211l-36.1 0l0 541l5.4 0zM530.2 194.8l10.8 0.6l0 -195.4l-151.7 0l0.9 27l1.6 27.1l1.9 21.6l2.9 21.7l3.7 18.2l4.3 14.2l2.1 5.4l4.5 9.7l5.4 8.7l7.1 8.7l3.7 3.5l5.4 4.4l5.4 3.7l5.4 3l10.8 4.9l6.2 2.1l10.1 2.9l16.2 3.3l21.6 2.9l21.7 1.8z"/><path fill="#9f0000" d="M5.4 541l103.7 0l-6.3 -2.2l-5.5 -3.2l-5.3 -2.5l-10.2 -8.3l-5.6 -5.4l-9.1 -10.9l-2.2 -4.1l-1.2 -1.3l-4.2 -9.6l-1.2 -1.2l-2.3 -5.4l-1 -5.4l-0.9 -2.8l-2.1 -2.6l-1.4 -5.4l-1.9 -13.2l-1.9 -3.1l-1.3 -5.4l-2.2 -28l-1.7 -4.4l-0.9 -5.4l-0.9 -10.9l-1.9 -93.8l-1.1 -14.4l-0.8 -21.6l-0.9 -81.2l-0.3 -189.3l-34.8 0l0 541l5.4 0zM541 184.1l0 -184.1l-142.1 0l1.4 32.5l1.6 21.6l2.4 21.6l2.6 16.3l4.3 18.4l4.8 14l5.1 10.8l6.3 9.7l5.4 6.3l5.4 5.1l8.2 6l9.8 5.4l13.8 5.4l11.5 3.2l16.2 3.2l21.7 2.8l21.6 1.8z"/><path fill="#8f0000" d="M5.4 541l100.7 0l-8.7 -2.6l-2.8 -2.8l-2.6 -1.2l-5.4 -4.7l-5.5 -3l-7.4 -7.3l-3.1 -5.4l-4.6 -5.5l-1.1 -2l-3.4 -3.4l-1.1 -5.4l-0.9 -2l-3.4 -3.4l-2 -11.5l-3.8 -4.7l-1.6 -15.3l-0.9 -1l-2.8 -5.4l-0.6 -5.4l-1.1 -23.1l-2.5 -3.9l-1.1 -5.4l-0.9 -16.3l-0.5 -54.1l-0.4 -16.2l-1.2 -5.4l-1.2 -10.8l-1.2 -37.9l-0.5 -81.1l-0.2 -194.8l-33.6 0l0 541l5.4 0zM508.5 168l16.3 2.1l16.2 1.6l0 -171.7l-131.7 0l1.1 21.6l1.6 21.7l2.4 21.6l2.2 14l2.8 13.1l3 10.8l5 13.3l5.4 10.4l5.4 7.8l5.6 6.4l6.1 5.4l9.9 6.7l10.9 5.2l10.8 3.9l10.8 2.9l16.2 3.2z"/></g></g><g transform="scale(1.00185,1)"><g fill="none" stroke-width="1" stroke-linejoin="round" shape-rendering="crispEdges"><path stroke="#0000af" d="M136.1 0l-0.9 167.7l-1 54.1l-1.5 43.3l-1.2 21.6l-1.3 16.3l-2.4 16.2l-3.4 15.7l-3.2 5.9l-2.2 3.2l-5.4 -0.8l-5.4 -10.2l-5.4 -24.1l-2.3 -22.2l-1.8 -21.6l-1.5 -27.1l-1.4 -59.5l-0.7 -70.3l-0.4 -108.2"/><path stroke="#0000ff" d="M159.9 0l-0.3 167.7l-0.6 119l-0.7 54.1l-1.4 34.3l-1.4 14.4l-1.7 10.8l-2.3 9.5l-2.7 6.8l-3.1 5.4l-5 5.4l-5.5 3l-5.4 1.2l-5.4 -0.4l-5.4 -2l-5.4 -3.7l-5.4 -5.7l-5.4 -8.5l-5.4 -12.8l-5.4 -19.8l-2.7 -16.2l-2.7 -20.6l-1.8 -22.7l-1.5 -27.1l-1.2 -32.4l-0.7 -32.5l-0.8 -81.1l-0.4 -146.1"/><path stroke="#0060ff" d="M178.9 0l0 211l0.4 54.1l0.7 37.9l1.1 32.4l1.7 27.1l2.5 27l4.7 37.9l0.4 10.8l-0.6 5.4l-1.5 5.4l-3 5.4l-5.7 5.4l-6.5 3.6l-5.4 2.1l-5.4 1.4l-5.4 0.9l-5.4 0.5l-5.4 0.1l-5.4 -0.3l-5.5 -0.8l-5.4 -1.2l-5.4 -1.9l-5.4 -2.6l-5.4 -3.5l-4.4 -3.7l-6.4 -6.9l-5.4 -8l-5.8 -12.1l-5 -15l-2.8 -12.1l-2.7 -13.4l-3 -24.4l-2.3 -27.1l-1.3 -27l-1.1 -32.5l-0.8 -43.3l-0.5 -54.1l-0.5 -178.5"/><path stroke="#00afff" d="M541 498.6l-97.4 -0.4l-70.3 -0.7l-173.1 -3.4l-32.5 -1.3l-10.8 -1.1l-10.8 -1.6l-10.9 -2.4l-5.4 -1.7l-10.8 -4.5l-5.4 -3.2l-5.4 -3.9l-5.4 -4.9l-5.4 -6.2l-5.9 -8.9l-4.9 -9.9l-5.5 -15.1l-3.2 -12.8l-2.3 -10.8l-3 -21.7l-2.3 -20.9l-1.4 -22.4l-1.3 -27l-1.5 -64.9l-0.8 -92l-0.3 -156.9M196.8 0l0.1 140.7l0.4 75.7l1.2 54.1l2 37.9l1.4 16.2l2 16.2l2.8 16.3l2.4 10.8l3.2 10.8l4.2 10.8l5.3 10.3l5.4 7.9l5.4 6.3l5.4 5l5.5 4.2l5.4 3.4l5.4 3l10.8 4.6l10.8 3.3l10.8 2.6l16.3 2.6l16.2 1.8l16.2 1.2l37.9 1.5l59.5 0.6l108.2 0"/><path stroke="#10ffef" d="M541 517.6l-140.7 -0.5l-91.9 -1.2l-63.9 -1.9l-28.1 -1.7l-27 -2l-17.9 -1.8l-14.6 -2.1l-16.2 -3.2l-10.9 -3.2l-6.2 -2.3l-10.9 -5.4l-7.8 -5.4l-7.5 -6.8l-5.4 -6.5l-5.5 -8.3l-5.4 -10.9l-5.4 -15.4l-4.1 -17l-2 -10.8l-2.3 -16.3l-2.4 -22.9l-1.6 -25.8l-1.2 -27l-1.5 -64.9l-0.7 -92l-0.3 -162.3M214.7 0l0.1 119l0.6 70.3l1.3 54.1l2.2 37.9l3 27.1l2.7 16.2l2.6 11.3l3.1 10.3l4.3 10.9l3.4 6.9l6 9.3l4.9 5.8l5.4 5.2l6.8 5.2l9.4 5.5l10.8 4.6l10.8 3.4l10.9 2.6l16.2 2.7l16.2 1.9l16.3 1.2l37.8 1.7l59.5 1l92 0.2"/><path stroke="#60ff9f" d="M541 528.7l-146.1 -0.4l-86.5 -1l-37.9 -1l-32.5 -1.3l-21.6 -1.3l-21.6 -1.7l-21.7 -2.3l-16.2 -2.5l-16.2 -3.2l-10.9 -3.2l-10.8 -4.1l-5.4 -2.5l-5.4 -3.1l-5.4 -3.7l-5.4 -4.4l-5.4 -5.5l-5.4 -6.9l-6 -9.9l-4.9 -10.5l-5.4 -16.3l-3.7 -16.5l-2 -10.8l-2.7 -21.7l-2.4 -26.3l-2.2 -49.4l-1.3 -64.9l-0.6 -92l-0.3 -162.3M233.3 -0l0.2 108.2l0.7 64.9l1.5 48.7l1.2 21.6l1.3 16.3l1.7 16.2l2.5 16.2l2.3 10.9l2.8 10.8l3.8 10.8l3 6.9l5.1 9.3l5.7 7.7l5.4 5.8l5.4 4.7l5.4 3.8l5.4 3.2l5.4 2.7l10.9 4.3l10.8 3.2l10.8 2.4l16.2 2.6l16.3 1.8l16.2 1.2l37.9 1.7l48.6 0.8l81.2 0.4"/><path stroke="#bfff40" d="M541 537l-151.5 -0.4l-86.5 -0.9l-59.5 -1.9l-27.1 -1.5l-21.6 -1.6l-21.7 -2.4l-16.2 -2.4l-16.2 -3.3l-11.9 -3.2l-9.8 -3.6l-5.4 -2.4l-5.4 -2.8l-5.4 -3.3l-5.4 -3.9l-6.2 -5.7l-4.6 -5l-4.3 -5.8l-6.4 -10.8l-5.6 -13.1l-2.7 -8.6l-3 -10.8l-4.1 -21.6l-2.2 -16.2l-2 -21.7l-1.6 -21.6l-1 -21.7l-0.9 -32.4l-0.7 -37.9l-0.7 -97.4l-0.3 -173.1M253.2 0l0.3 92l0.8 59.5l1.3 43.3l1.3 21.6l1.3 16.2l1.7 16.3l2.5 16.2l2.2 10.8l2.9 10.8l3 8.9l3.1 7.4l2.6 5.4l3.2 5.4l3.8 5.4l4.6 5.4l5.6 5.4l7.2 5.4l9.4 5.4l9.2 4l10.8 3.6l10.8 2.6l10.9 2.1l10.8 1.5l16.2 1.8l16.2 1.2l21.7 1.1l48.7 1.3l75.7 0.5"/><path stroke="#ffef00" d="M247.2 541l-41.6 -2.4l-32.5 -3.1l-16.2 -2.4l-15.2 -2.9l-11.9 -3.1l-10.8 -3.6l-10.8 -4.8l-8.1 -4.7l-7.2 -5.5l-6.3 -5.9l-5.5 -6.4l-5.4 -8.1l-5.4 -10.5l-2.7 -6.9l-3.7 -10.9l-4.1 -16.2l-3.7 -21.6l-2 -15.6l-1 -11.5l-1.6 -21.6l-1.1 -21.7l-1.6 -48.6l-0.7 -59.6l-0.6 -243.4M275.2 0l0.4 81.1l0.9 54.1l1.7 43.3l2.6 32.5l2.1 16.2l1.8 10.8l2.2 10.9l3 10.8l3.8 10.8l3.8 8.4l4.6 7.8l3.9 5.4l2.4 2.8l5.4 5.6l5.4 4.5l5.4 3.7l9.4 5.1l6.8 2.9l10.9 3.6l10.8 2.7l10.8 2.1l10.8 1.6l16.2 1.8l32.5 2.1l43.3 1.3l64.9 0.7"/><path stroke="#ff8f00" d="M168.4 541l-16.9 -2.7l-10.8 -2l-10.9 -2.8l-10.8 -3.3l-10.8 -4.5l-5.4 -2.8l-5.4 -3.3l-5.4 -3.9l-5.4 -4.7l-5.5 -5.7l-5.4 -7l-5.4 -9l-5.9 -13.2l-3.6 -10.8l-2.9 -10.9l-3.8 -18.7l-1.9 -13.7l-1.8 -16.2l-2.2 -27.1l-1.8 -43.3l-1.1 -48.7l-0.6 -59.5l-0.5 -227.2M300.2 0l0.6 70.3l1.1 48.7l1.9 37.9l2.4 27l3.2 21.7l2.2 10.8l2.8 10.8l3.7 10.8l2.3 5.4l4.2 8.3l5.4 8.3l5.4 6.3l5.4 5.2l5.8 4.4l9 5.4l6.9 3.2l5.5 2.2l10.7 3.4l10.8 2.6l10.8 2l16.3 2.2l27 2.3l43.3 1.8l54.1 0.8"/><path stroke="#ff4000" d="M136.8 541l-17.8 -4.9l-5.4 -2l-8.9 -3.9l-7.3 -4l-5.4 -3.6l-5.4 -4.2l-5.5 -5.2l-5.4 -6.3l-5.4 -7.9l-6.3 -12.1l-4.5 -11.6l-2.9 -10l-2.5 -9.7l-2.3 -12l-3.1 -20.5l-2.6 -28.2l-1.9 -32.4l-1.3 -37.9l-0.8 -48.7l-0.5 -59.5l-0.3 -216.4M329.9 0l0.8 54.1l1.3 43.3l2 32.4l1.4 15.3l1.5 11.8l1.7 10.8l2.2 11.7l2.6 9.9l2.8 9.3l5.5 12.8l5.4 9.3l4.8 6.5l5 5.4l6.2 5.4l5.6 4l5.4 3.1l7.8 3.8l8.4 3.2l7.1 2.2l9.2 2.2l10.8 2.2l10.8 1.6l27.1 2.8l32.4 1.8l43.3 1.1"/><path stroke="#df0000" d="M118 541l-13.8 -5.4l-6.8 -3.5l-5.4 -3.3l-5.4 -3.9l-5.5 -4.7l-5.4 -5.7l-5.4 -7.1l-5.8 -9.7l-5 -10.8l-1.9 -5.4l-5 -16.2l-5.4 -27.1l-2.9 -27l-2.4 -27.1l-0.7 -16.2l-1.4 -54.1l-1 -102.8l-0.4 -211M367.5 0l1.1 43.3l1.7 32.4l2.3 27.1l3.1 21.6l3.4 16.3l5 16.4l4.7 10.6l2.9 5.4l3.5 5.4l4.2 5.4l5.1 5.4l6.4 5.5l8.2 5.4l8.3 4.2l5.4 2.2l13.6 4.4l8 1.9l10.9 2.1l21.6 2.9l27.1 2.2l27 1.2"/><path stroke="#8f0000" d="M102.8 541l-5.4 0l-5.4 -5.4l-5.4 0l-21.7 -21.6l0 -5.5l-5.4 -5.4l0 -5.4l-5.4 -5.4l0 -5.4l-5.4 -5.4l0 -16.2l-5.4 -5.5l0 -27l-5.4 -5.4l0 -75.8l-5.4 -5.4l0 -346.2M422 0l0 27.1l5.4 5.4l0 32.5l5.3 5.3l0.1 16.3l5.4 5.4l0 10.8l5.4 5.4l0 5.4l27.1 27.1l5.4 0l5.4 5.4l10.8 0l5.4 5.4l21.7 0l5.4 5.4l16.2 0"/></g></g><path d="M0 0.500H32.500M422.500 0.500H542M541.500 0V157" fill="none" stroke="#800000" stroke-opacity="0.25" shape-rendering="crispEdges"/></g><ellipse cx="356.607" cy="474.68" rx="3.2" ry="3.9" fill="#000" transform="rotate(-20 356.607 474.68)"/></g><g font-family="'Liberation Sans',Arial,sans-serif" font-size="13.6" fill="#262626"><text x="336.5" y="629.7" text-anchor="middle">0.5</text><text x="330.5" y="616.6" text-anchor="end">0.5</text><text x="471.75" y="629.7" text-anchor="middle">1</text><text x="330.5" y="481.35" text-anchor="end">1</text><text x="607" y="629.7" text-anchor="middle">1.5</text><text x="330.5" y="346.1" text-anchor="end">1.5</text><text x="742.25" y="629.7" text-anchor="middle">2</text><text x="330.5" y="210.85" text-anchor="end">2</text><text x="877.5" y="629.7" text-anchor="middle">2.5</text><text x="330.5" y="75.6" text-anchor="end">2.5</text></g><g font-family="'Liberation Serif','DejaVu Serif',serif" font-size="15.2" fill="#262626"><text x="607" y="648" text-anchor="middle" textLength="146" lengthAdjust="spacingAndGlyphs">A-B bond distance (Å)</text><text transform="translate(303,340) rotate(-90)" text-anchor="middle" textLength="148" lengthAdjust="spacingAndGlyphs">B-C bond distance (Å)</text></g></svg>
 </div>
</div>
</body>
</html>
